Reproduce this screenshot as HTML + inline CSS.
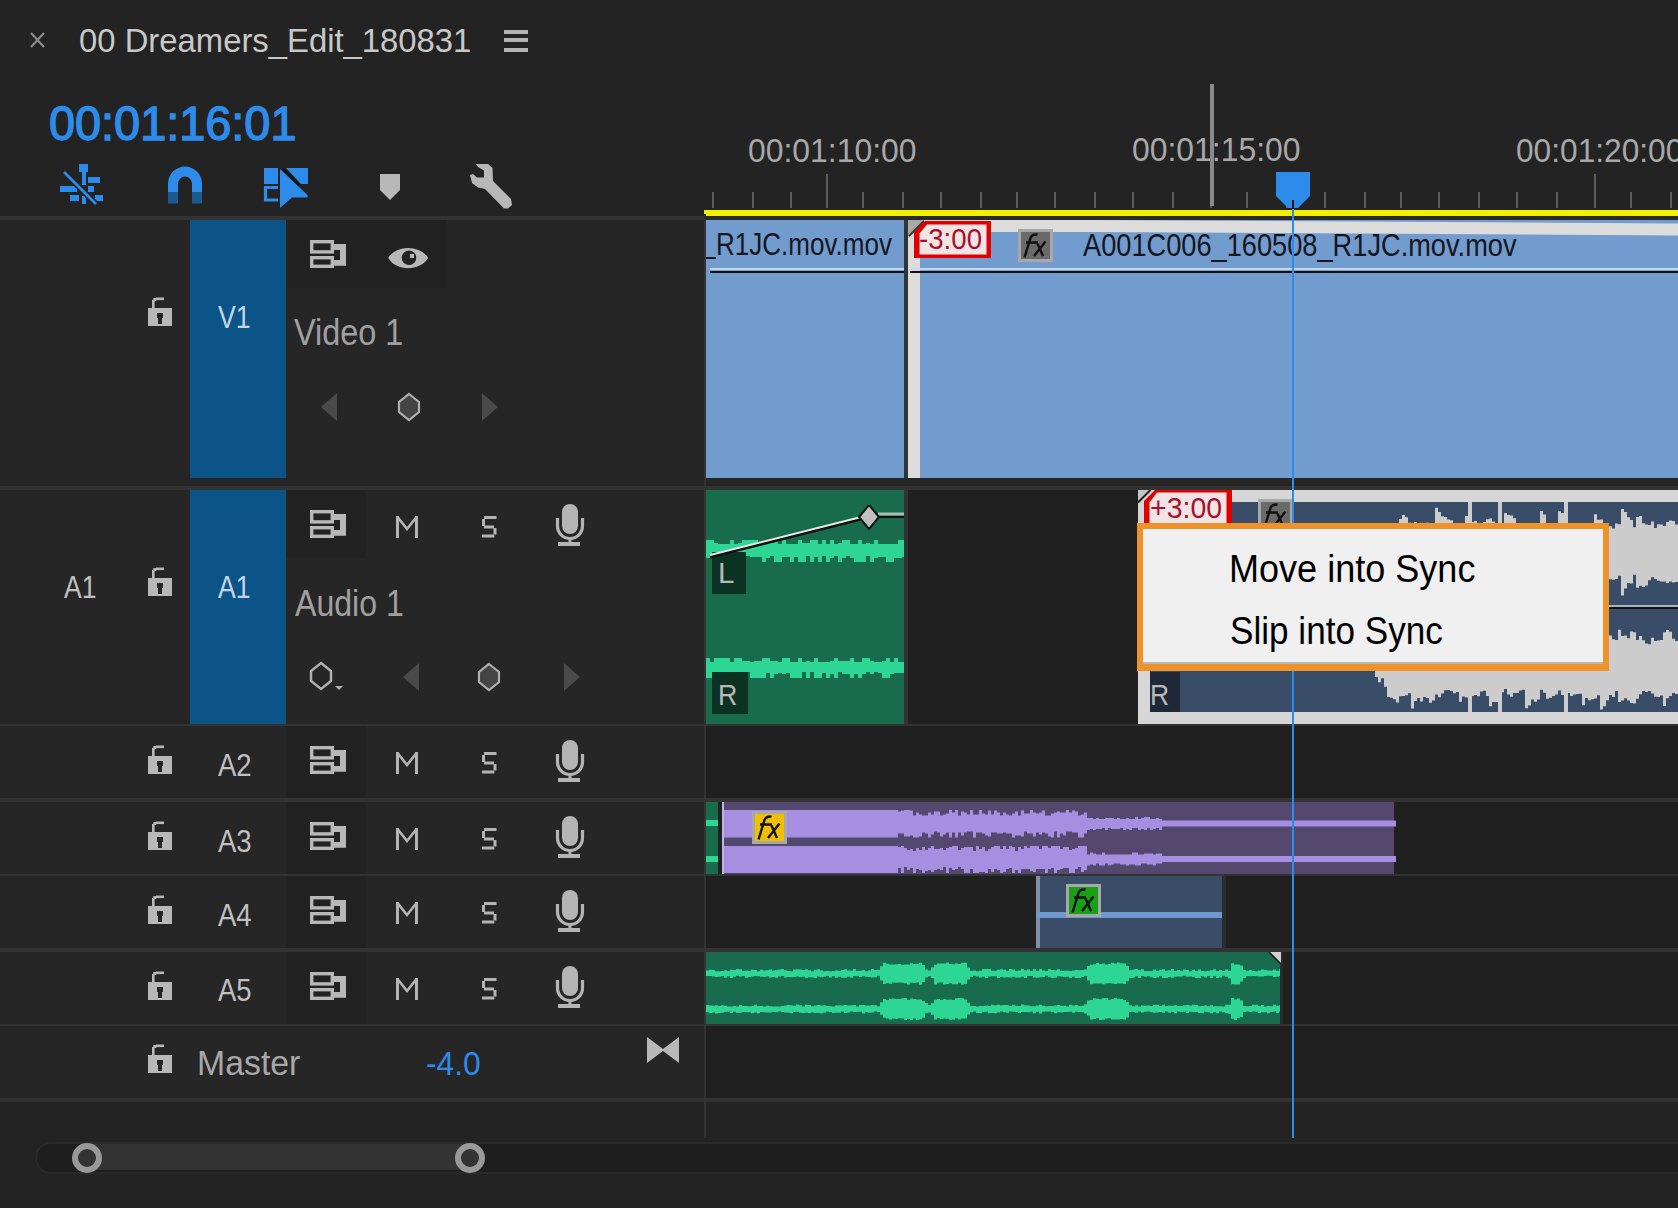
<!DOCTYPE html><html><head><meta charset="utf-8"><style>html,body{margin:0;padding:0}body{width:1678px;height:1208px;background:#232323;position:relative;overflow:hidden}</style></head><body><div style="position:absolute;left:0px;top:216px;width:704px;height:4px;background:#333333;"></div>
<div style="position:absolute;left:704px;top:216px;width:974px;height:4px;background:#2a2a2a;"></div>
<div style="position:absolute;left:0px;top:220px;width:704px;height:266px;background:#262626;"></div>
<div style="position:absolute;left:706px;top:220px;width:972px;height:266px;background:#202020;"></div>
<div style="position:absolute;left:0px;top:490px;width:704px;height:234px;background:#262626;"></div>
<div style="position:absolute;left:706px;top:490px;width:972px;height:234px;background:#202020;"></div>
<div style="position:absolute;left:0px;top:726px;width:704px;height:72px;background:#262626;"></div>
<div style="position:absolute;left:706px;top:726px;width:972px;height:72px;background:#202020;"></div>
<div style="position:absolute;left:0px;top:802px;width:704px;height:72px;background:#262626;"></div>
<div style="position:absolute;left:706px;top:802px;width:972px;height:72px;background:#202020;"></div>
<div style="position:absolute;left:0px;top:876px;width:704px;height:72px;background:#262626;"></div>
<div style="position:absolute;left:706px;top:876px;width:972px;height:72px;background:#202020;"></div>
<div style="position:absolute;left:0px;top:952px;width:704px;height:72px;background:#262626;"></div>
<div style="position:absolute;left:706px;top:952px;width:972px;height:72px;background:#202020;"></div>
<div style="position:absolute;left:0px;top:1026px;width:704px;height:72px;background:#262626;"></div>
<div style="position:absolute;left:706px;top:1026px;width:972px;height:72px;background:#202020;"></div>
<div style="position:absolute;left:706px;top:478px;width:972px;height:8px;background:#262626;"></div>
<div style="position:absolute;left:0px;top:486px;width:1678px;height:4px;background:#333333;"></div>
<div style="position:absolute;left:0px;top:724px;width:1678px;height:2px;background:#333333;"></div>
<div style="position:absolute;left:0px;top:798px;width:1678px;height:4px;background:#333333;"></div>
<div style="position:absolute;left:0px;top:874px;width:1678px;height:2px;background:#333333;"></div>
<div style="position:absolute;left:0px;top:948px;width:1678px;height:4px;background:#333333;"></div>
<div style="position:absolute;left:0px;top:1024px;width:1678px;height:2px;background:#333333;"></div>
<div style="position:absolute;left:0px;top:1098px;width:1678px;height:4px;background:#333333;"></div>
<div style="position:absolute;left:704px;top:220px;width:2px;height:918px;background:#333333;"></div>
<div style="position:absolute;left:286px;top:220px;width:161px;height:68px;background:#222222;"></div>
<div style="position:absolute;left:286px;top:490px;width:80px;height:68px;background:#222222;"></div>
<div style="position:absolute;left:286px;top:726px;width:80px;height:72px;background:#222222;"></div>
<div style="position:absolute;left:286px;top:802px;width:80px;height:72px;background:#222222;"></div>
<div style="position:absolute;left:286px;top:876px;width:80px;height:72px;background:#222222;"></div>
<div style="position:absolute;left:286px;top:952px;width:80px;height:72px;background:#222222;"></div>
<svg style="position:absolute;left:28px;top:30px;" width="20" height="20" viewBox="0 0 20 20"><path d="M3 3L16 17M16 3L3 17" stroke="#8a8a8a" stroke-width="2.2"/></svg>
<div id="title" style="position:absolute;left:79.00px;top:22.50px;font-family:'Liberation Sans',sans-serif;font-size:34px;line-height:34px;color:#c8c8c8;white-space:nowrap;transform:scaleX(0.9655);transform-origin:0 0;">00 Dreamers_Edit_180831</div>
<div style="position:absolute;left:504px;top:30px;width:24px;height:4px;background:#b4b4b4;"></div>
<div style="position:absolute;left:504px;top:38px;width:24px;height:4px;background:#b4b4b4;"></div>
<div style="position:absolute;left:504px;top:48px;width:24px;height:4px;background:#b4b4b4;"></div>
<div id="tc" style="position:absolute;left:49.00px;top:100.00px;font-family:'Liberation Sans',sans-serif;font-size:48px;line-height:48px;color:#2d8ceb;white-space:nowrap;transform:scaleX(0.9759);transform-origin:0 0;-webkit-text-stroke:1.4px #2d8ceb;">00:01:16:01</div>
<svg style="position:absolute;left:56px;top:160px" width="52" height="48" viewBox="56 160 52 48"><g fill="#2d8ceb"><rect x="79" y="164" width="9" height="8"/><rect x="82" y="172" width="4" height="13"/><rect x="88" y="177" width="12" height="6"/><rect x="60" y="186" width="17" height="6"/><rect x="88" y="186" width="6" height="6"/><rect x="70" y="195" width="9" height="6"/><rect x="82" y="196" width="4" height="8"/><rect x="95" y="195" width="8" height="6"/></g><path d="M64 172L96 204" stroke="#232323" stroke-width="6"/><path d="M64 172L96 204" stroke="#2d8ceb" stroke-width="2.6"/></svg>
<svg style="position:absolute;left:164px;top:162px" width="42" height="46" viewBox="164 162 42 46"><path d="M168 192V183.6A17 17 0 0 1 202 183.6V192H192V183.6A7 7 0 0 0 178 183.6V192Z" fill="#2d8ceb"/><rect x="168" y="192" width="10" height="11.5" fill="#1d5a92"/><rect x="192" y="192" width="10" height="11.5" fill="#1d5a92"/></svg>
<svg style="position:absolute;left:260px;top:164px" width="52" height="48" viewBox="260 164 52 48"><rect x="264" y="168" width="14" height="16" fill="#2d8ceb"/><path d="M278 187.5H265.5V200H278" fill="none" stroke="#2d8ceb" stroke-width="3.2"/><path d="M280 169L307.5 195V197.5H292L280 208Z" fill="#2d8ceb"/><path d="M286 168H308V184H301Z" fill="#2d8ceb"/><path d="M283 169L299 185" stroke="#111" stroke-width="2.2"/></svg>
<svg style="position:absolute;left:376px;top:170px" width="28" height="34" viewBox="376 170 28 34"><path d="M380 174H400V190L390 200L380 190Z" fill="#b8b8b8"/></svg>
<svg style="position:absolute;left:464px;top:158px" width="54" height="54" viewBox="464 158 54 54"><path d="M476 164H488L492.5 168L493 181L511 199L512 205L508 208.5H504L485 189L478 187.5L472 183L470 175L473 174L477 177.5H484V170.5L478 167Z" fill="#b8b8b8"/></svg>
<div id="r1" style="position:absolute;left:747.60px;top:133.60px;font-family:'Liberation Sans',sans-serif;font-size:33px;line-height:33px;color:#a8a8a8;white-space:nowrap;transform:scaleX(0.9672);transform-origin:0 0;">00:01:10:00</div>
<div id="r2" style="position:absolute;left:1131.80px;top:133.40px;font-family:'Liberation Sans',sans-serif;font-size:33px;line-height:33px;color:#a8a8a8;white-space:nowrap;transform:scaleX(0.9672);transform-origin:0 0;">00:01:15:00</div>
<div id="r3" style="position:absolute;left:1515.60px;top:133.60px;font-family:'Liberation Sans',sans-serif;font-size:33px;line-height:33px;color:#a8a8a8;white-space:nowrap;transform:scaleX(0.9600);transform-origin:0 0;">00:01:20:00</div>
<div style="position:absolute;left:712px;top:192px;width:2px;height:16px;background:#5c5c5c;"></div>
<div style="position:absolute;left:752px;top:192px;width:2px;height:16px;background:#5c5c5c;"></div>
<div style="position:absolute;left:790px;top:192px;width:2px;height:16px;background:#5c5c5c;"></div>
<div style="position:absolute;left:826px;top:174px;width:2px;height:34px;background:#5c5c5c;"></div>
<div style="position:absolute;left:862px;top:192px;width:2px;height:16px;background:#5c5c5c;"></div>
<div style="position:absolute;left:902px;top:192px;width:2px;height:16px;background:#5c5c5c;"></div>
<div style="position:absolute;left:940px;top:192px;width:2px;height:16px;background:#5c5c5c;"></div>
<div style="position:absolute;left:980px;top:192px;width:2px;height:16px;background:#5c5c5c;"></div>
<div style="position:absolute;left:1016px;top:192px;width:2px;height:16px;background:#5c5c5c;"></div>
<div style="position:absolute;left:1054px;top:192px;width:2px;height:16px;background:#5c5c5c;"></div>
<div style="position:absolute;left:1094px;top:192px;width:2px;height:16px;background:#5c5c5c;"></div>
<div style="position:absolute;left:1132px;top:192px;width:2px;height:16px;background:#5c5c5c;"></div>
<div style="position:absolute;left:1172px;top:192px;width:2px;height:16px;background:#5c5c5c;"></div>
<div style="position:absolute;left:1210px;top:174px;width:2px;height:34px;background:#5c5c5c;"></div>
<div style="position:absolute;left:1246px;top:192px;width:2px;height:16px;background:#5c5c5c;"></div>
<div style="position:absolute;left:1286px;top:192px;width:2px;height:16px;background:#5c5c5c;"></div>
<div style="position:absolute;left:1324px;top:192px;width:2px;height:16px;background:#5c5c5c;"></div>
<div style="position:absolute;left:1364px;top:192px;width:2px;height:16px;background:#5c5c5c;"></div>
<div style="position:absolute;left:1400px;top:192px;width:2px;height:16px;background:#5c5c5c;"></div>
<div style="position:absolute;left:1438px;top:192px;width:2px;height:16px;background:#5c5c5c;"></div>
<div style="position:absolute;left:1478px;top:192px;width:2px;height:16px;background:#5c5c5c;"></div>
<div style="position:absolute;left:1516px;top:192px;width:2px;height:16px;background:#5c5c5c;"></div>
<div style="position:absolute;left:1556px;top:192px;width:2px;height:16px;background:#5c5c5c;"></div>
<div style="position:absolute;left:1594px;top:174px;width:2px;height:34px;background:#5c5c5c;"></div>
<div style="position:absolute;left:1630px;top:192px;width:2px;height:16px;background:#5c5c5c;"></div>
<div style="position:absolute;left:1670px;top:192px;width:2px;height:16px;background:#5c5c5c;"></div>
<div style="position:absolute;left:1210px;top:84px;width:4px;height:122px;background:#8a8a8a;"></div>
<div style="position:absolute;left:704px;top:210px;width:974px;height:6px;background:#f0f000;"></div>
<div style="position:absolute;left:704px;top:214px;width:2px;height:2px;background:#232323;"></div>
<div style="position:absolute;left:190px;top:220px;width:96px;height:258px;background:#0a5488;"></div>
<div style="position:absolute;left:190px;top:490px;width:96px;height:234px;background:#0a5488;"></div>
<svg style="position:absolute;left:146px;top:296px" width="28" height="32" viewBox="146 296 28 32"><g fill="#b8b8b8"><rect x="148" y="308" width="24" height="18"/><rect x="152" y="300" width="2.6" height="8.5"/><rect x="153.3" y="298" width="3" height="3"/><rect x="156" y="297.5" width="8" height="2.6"/></g><rect x="157" y="313" width="6" height="5" fill="#262626"/><rect x="158" y="317" width="4" height="7" fill="#262626"/></svg>
<svg style="position:absolute;left:146px;top:566px" width="28" height="32" viewBox="146 566 28 32"><g fill="#b8b8b8"><rect x="148" y="578" width="24" height="18"/><rect x="152" y="570" width="2.6" height="8.5"/><rect x="153.3" y="568" width="3" height="3"/><rect x="156" y="567.5" width="8" height="2.6"/></g><rect x="157" y="583" width="6" height="5" fill="#262626"/><rect x="158" y="587" width="4" height="7" fill="#262626"/></svg>
<svg style="position:absolute;left:146px;top:744px" width="28" height="32" viewBox="146 744 28 32"><g fill="#b8b8b8"><rect x="148" y="756" width="24" height="18"/><rect x="152" y="748" width="2.6" height="8.5"/><rect x="153.3" y="746" width="3" height="3"/><rect x="156" y="745.5" width="8" height="2.6"/></g><rect x="157" y="761" width="6" height="5" fill="#262626"/><rect x="158" y="765" width="4" height="7" fill="#262626"/></svg>
<svg style="position:absolute;left:146px;top:820px" width="28" height="32" viewBox="146 820 28 32"><g fill="#b8b8b8"><rect x="148" y="832" width="24" height="18"/><rect x="152" y="824" width="2.6" height="8.5"/><rect x="153.3" y="822" width="3" height="3"/><rect x="156" y="821.5" width="8" height="2.6"/></g><rect x="157" y="837" width="6" height="5" fill="#262626"/><rect x="158" y="841" width="4" height="7" fill="#262626"/></svg>
<svg style="position:absolute;left:146px;top:894px" width="28" height="32" viewBox="146 894 28 32"><g fill="#b8b8b8"><rect x="148" y="906" width="24" height="18"/><rect x="152" y="898" width="2.6" height="8.5"/><rect x="153.3" y="896" width="3" height="3"/><rect x="156" y="895.5" width="8" height="2.6"/></g><rect x="157" y="911" width="6" height="5" fill="#262626"/><rect x="158" y="915" width="4" height="7" fill="#262626"/></svg>
<svg style="position:absolute;left:146px;top:970px" width="28" height="32" viewBox="146 970 28 32"><g fill="#b8b8b8"><rect x="148" y="982" width="24" height="18"/><rect x="152" y="974" width="2.6" height="8.5"/><rect x="153.3" y="972" width="3" height="3"/><rect x="156" y="971.5" width="8" height="2.6"/></g><rect x="157" y="987" width="6" height="5" fill="#262626"/><rect x="158" y="991" width="4" height="7" fill="#262626"/></svg>
<svg style="position:absolute;left:146px;top:1043px" width="28" height="32" viewBox="146 1043 28 32"><g fill="#b8b8b8"><rect x="148" y="1055" width="24" height="18"/><rect x="152" y="1047" width="2.6" height="8.5"/><rect x="153.3" y="1045" width="3" height="3"/><rect x="156" y="1044.5" width="8" height="2.6"/></g><rect x="157" y="1060" width="6" height="5" fill="#262626"/><rect x="158" y="1064" width="4" height="7" fill="#262626"/></svg>
<svg style="position:absolute;left:308px;top:238px" width="40" height="32" viewBox="308 238 40 32"><g fill="none" stroke="#b8b8b8" stroke-width="3.4"><rect x="311.7" y="241.7" width="20.6" height="10.2"/><rect x="311.7" y="257.7" width="20.6" height="8.6"/></g><path d="M334 244H346V265.7H334V260H340V250H334Z" fill="#b8b8b8"/></svg>
<svg style="position:absolute;left:386px;top:244px" width="44" height="28" viewBox="386 244 44 28"><path d="M388.2 258C396 244.5 420 244.5 428.2 258C420 271.5 396 271.5 388.2 258Z" fill="#b8b8b8"/><circle cx="409" cy="257.8" r="7.3" fill="#222"/><rect x="410" y="254" width="4" height="4" fill="#b8b8b8"/></svg>
<svg style="position:absolute;left:308px;top:508px" width="40" height="32" viewBox="308 508 40 32"><g fill="none" stroke="#b8b8b8" stroke-width="3.4"><rect x="311.7" y="511.7" width="20.6" height="10.2"/><rect x="311.7" y="527.7" width="20.6" height="8.6"/></g><path d="M334 514H346V535.7H334V530H340V520H334Z" fill="#b8b8b8"/></svg>
<svg style="position:absolute;left:394px;top:514px" width="26" height="26" viewBox="394 514 26 26"><g fill="#b4b4b4"><rect x="396" y="516" width="3" height="22"/><rect x="415" y="516" width="3" height="22"/></g><path d="M397.5 517L407 529L416.5 517" fill="none" stroke="#b4b4b4" stroke-width="2.6"/></svg>
<svg style="position:absolute;left:480px;top:514px" width="20" height="26" viewBox="480 514 20 26"><g fill="#b4b4b4"><rect x="484" y="516" width="12.5" height="3"/><rect x="482" y="519" width="3" height="7"/><rect x="484" y="525.5" width="10" height="3"/><rect x="493.5" y="528" width="3" height="6.5"/><rect x="482" y="534.5" width="12.3" height="3"/></g></svg>
<svg style="position:absolute;left:555px;top:503px;" width="30" height="44" viewBox="0 0 30 44"><rect x="7" y="1" width="16" height="30" rx="8" fill="#b4b4b4"/><path d="M2.5 15V23A12.5 12.5 0 0 0 27.5 23V15" fill="none" stroke="#b4b4b4" stroke-width="3.2"/><rect x="13.5" y="36" width="3" height="5" fill="#b4b4b4"/><rect x="3" y="39" width="22" height="4" fill="#b4b4b4"/></svg>
<svg style="position:absolute;left:308px;top:744px" width="40" height="32" viewBox="308 744 40 32"><g fill="none" stroke="#b8b8b8" stroke-width="3.4"><rect x="311.7" y="747.7" width="20.6" height="10.2"/><rect x="311.7" y="763.7" width="20.6" height="8.6"/></g><path d="M334 750H346V771.7H334V766H340V756H334Z" fill="#b8b8b8"/></svg>
<svg style="position:absolute;left:394px;top:750px" width="26" height="26" viewBox="394 750 26 26"><g fill="#b4b4b4"><rect x="396" y="752" width="3" height="22"/><rect x="415" y="752" width="3" height="22"/></g><path d="M397.5 753L407 765L416.5 753" fill="none" stroke="#b4b4b4" stroke-width="2.6"/></svg>
<svg style="position:absolute;left:480px;top:750px" width="20" height="26" viewBox="480 750 20 26"><g fill="#b4b4b4"><rect x="484" y="752" width="12.5" height="3"/><rect x="482" y="755" width="3" height="7"/><rect x="484" y="761.5" width="10" height="3"/><rect x="493.5" y="764" width="3" height="6.5"/><rect x="482" y="770.5" width="12.3" height="3"/></g></svg>
<svg style="position:absolute;left:555px;top:739px;" width="30" height="44" viewBox="0 0 30 44"><rect x="7" y="1" width="16" height="30" rx="8" fill="#b4b4b4"/><path d="M2.5 15V23A12.5 12.5 0 0 0 27.5 23V15" fill="none" stroke="#b4b4b4" stroke-width="3.2"/><rect x="13.5" y="36" width="3" height="5" fill="#b4b4b4"/><rect x="3" y="39" width="22" height="4" fill="#b4b4b4"/></svg>
<svg style="position:absolute;left:308px;top:820px" width="40" height="32" viewBox="308 820 40 32"><g fill="none" stroke="#b8b8b8" stroke-width="3.4"><rect x="311.7" y="823.7" width="20.6" height="10.2"/><rect x="311.7" y="839.7" width="20.6" height="8.6"/></g><path d="M334 826H346V847.7H334V842H340V832H334Z" fill="#b8b8b8"/></svg>
<svg style="position:absolute;left:394px;top:826px" width="26" height="26" viewBox="394 826 26 26"><g fill="#b4b4b4"><rect x="396" y="828" width="3" height="22"/><rect x="415" y="828" width="3" height="22"/></g><path d="M397.5 829L407 841L416.5 829" fill="none" stroke="#b4b4b4" stroke-width="2.6"/></svg>
<svg style="position:absolute;left:480px;top:826px" width="20" height="26" viewBox="480 826 20 26"><g fill="#b4b4b4"><rect x="484" y="828" width="12.5" height="3"/><rect x="482" y="831" width="3" height="7"/><rect x="484" y="837.5" width="10" height="3"/><rect x="493.5" y="840" width="3" height="6.5"/><rect x="482" y="846.5" width="12.3" height="3"/></g></svg>
<svg style="position:absolute;left:555px;top:815px;" width="30" height="44" viewBox="0 0 30 44"><rect x="7" y="1" width="16" height="30" rx="8" fill="#b4b4b4"/><path d="M2.5 15V23A12.5 12.5 0 0 0 27.5 23V15" fill="none" stroke="#b4b4b4" stroke-width="3.2"/><rect x="13.5" y="36" width="3" height="5" fill="#b4b4b4"/><rect x="3" y="39" width="22" height="4" fill="#b4b4b4"/></svg>
<svg style="position:absolute;left:308px;top:894px" width="40" height="32" viewBox="308 894 40 32"><g fill="none" stroke="#b8b8b8" stroke-width="3.4"><rect x="311.7" y="897.7" width="20.6" height="10.2"/><rect x="311.7" y="913.7" width="20.6" height="8.6"/></g><path d="M334 900H346V921.7H334V916H340V906H334Z" fill="#b8b8b8"/></svg>
<svg style="position:absolute;left:394px;top:900px" width="26" height="26" viewBox="394 900 26 26"><g fill="#b4b4b4"><rect x="396" y="902" width="3" height="22"/><rect x="415" y="902" width="3" height="22"/></g><path d="M397.5 903L407 915L416.5 903" fill="none" stroke="#b4b4b4" stroke-width="2.6"/></svg>
<svg style="position:absolute;left:480px;top:900px" width="20" height="26" viewBox="480 900 20 26"><g fill="#b4b4b4"><rect x="484" y="902" width="12.5" height="3"/><rect x="482" y="905" width="3" height="7"/><rect x="484" y="911.5" width="10" height="3"/><rect x="493.5" y="914" width="3" height="6.5"/><rect x="482" y="920.5" width="12.3" height="3"/></g></svg>
<svg style="position:absolute;left:555px;top:889px;" width="30" height="44" viewBox="0 0 30 44"><rect x="7" y="1" width="16" height="30" rx="8" fill="#b4b4b4"/><path d="M2.5 15V23A12.5 12.5 0 0 0 27.5 23V15" fill="none" stroke="#b4b4b4" stroke-width="3.2"/><rect x="13.5" y="36" width="3" height="5" fill="#b4b4b4"/><rect x="3" y="39" width="22" height="4" fill="#b4b4b4"/></svg>
<svg style="position:absolute;left:308px;top:970px" width="40" height="32" viewBox="308 970 40 32"><g fill="none" stroke="#b8b8b8" stroke-width="3.4"><rect x="311.7" y="973.7" width="20.6" height="10.2"/><rect x="311.7" y="989.7" width="20.6" height="8.6"/></g><path d="M334 976H346V997.7H334V992H340V982H334Z" fill="#b8b8b8"/></svg>
<svg style="position:absolute;left:394px;top:976px" width="26" height="26" viewBox="394 976 26 26"><g fill="#b4b4b4"><rect x="396" y="978" width="3" height="22"/><rect x="415" y="978" width="3" height="22"/></g><path d="M397.5 979L407 991L416.5 979" fill="none" stroke="#b4b4b4" stroke-width="2.6"/></svg>
<svg style="position:absolute;left:480px;top:976px" width="20" height="26" viewBox="480 976 20 26"><g fill="#b4b4b4"><rect x="484" y="978" width="12.5" height="3"/><rect x="482" y="981" width="3" height="7"/><rect x="484" y="987.5" width="10" height="3"/><rect x="493.5" y="990" width="3" height="6.5"/><rect x="482" y="996.5" width="12.3" height="3"/></g></svg>
<svg style="position:absolute;left:555px;top:965px;" width="30" height="44" viewBox="0 0 30 44"><rect x="7" y="1" width="16" height="30" rx="8" fill="#b4b4b4"/><path d="M2.5 15V23A12.5 12.5 0 0 0 27.5 23V15" fill="none" stroke="#b4b4b4" stroke-width="3.2"/><rect x="13.5" y="36" width="3" height="5" fill="#b4b4b4"/><rect x="3" y="39" width="22" height="4" fill="#b4b4b4"/></svg>
<svg style="position:absolute;left:319px;top:392px;" width="20" height="30" viewBox="0 0 20 30"><path d="M18 1V29L2 15Z" fill="#4a4a4a"/></svg>
<svg style="position:absolute;left:397px;top:392px;" width="24" height="30" viewBox="0 0 24 30"><path d="M12 2L22 10V20L12 28L2 20V10Z" fill="#444" stroke="#b0b0b0" stroke-width="2.2"/></svg>
<svg style="position:absolute;left:480px;top:392px;" width="20" height="30" viewBox="0 0 20 30"><path d="M2 1V29L18 15Z" fill="#4a4a4a"/></svg>
<svg style="position:absolute;left:401px;top:662px;" width="20" height="30" viewBox="0 0 20 30"><path d="M18 1V29L2 15Z" fill="#4a4a4a"/></svg>
<svg style="position:absolute;left:477px;top:662px;" width="24" height="30" viewBox="0 0 24 30"><path d="M12 2L22 10V20L12 28L2 20V10Z" fill="#444" stroke="#b0b0b0" stroke-width="2.2"/></svg>
<svg style="position:absolute;left:562px;top:662px;" width="20" height="30" viewBox="0 0 20 30"><path d="M2 1V29L18 15Z" fill="#4a4a4a"/></svg>
<svg style="position:absolute;left:309px;top:660px;" width="40" height="34" viewBox="0 0 40 34"><path d="M12 3L22 11V21L12 29L2 21V11Z" fill="none" stroke="#b0b0b0" stroke-width="2.5"/><path d="M26 26h8l-4 4z" fill="#b0b0b0"/></svg>
<svg style="position:absolute;left:645px;top:1035px;" width="38" height="30" viewBox="0 0 38 30"><path d="M2 2L18 14L34 2V28L18 16L2 28Z" fill="#b8b8b8"/></svg>
<div id="v1" style="position:absolute;left:218.40px;top:301.00px;font-family:'Liberation Sans',sans-serif;font-size:32px;line-height:32px;color:#c4d4e4;white-space:nowrap;transform:scaleX(0.8326);transform-origin:0 0;">V1</div>
<div id="vid1" style="position:absolute;left:294.00px;top:315.00px;font-family:'Liberation Sans',sans-serif;font-size:36px;line-height:36px;color:#a0a0a0;white-space:nowrap;transform:scaleX(0.9000);transform-origin:0 0;">Video 1</div>
<div id="a1s" style="position:absolute;left:64.40px;top:571.00px;font-family:'Liberation Sans',sans-serif;font-size:32px;line-height:32px;color:#c0c0c0;white-space:nowrap;transform:scaleX(0.8274);transform-origin:0 0;">A1</div>
<div id="a1" style="position:absolute;left:218.40px;top:571.00px;font-family:'Liberation Sans',sans-serif;font-size:32px;line-height:32px;color:#c4d4e4;white-space:nowrap;transform:scaleX(0.8322);transform-origin:0 0;">A1</div>
<div id="aud1" style="position:absolute;left:295.00px;top:586.00px;font-family:'Liberation Sans',sans-serif;font-size:36px;line-height:36px;color:#a0a0a0;white-space:nowrap;transform:scaleX(0.8917);transform-origin:0 0;">Audio 1</div>
<div id="a2" style="position:absolute;left:218.20px;top:749.00px;font-family:'Liberation Sans',sans-serif;font-size:32px;line-height:32px;color:#c0c0c0;white-space:nowrap;transform:scaleX(0.8588);transform-origin:0 0;">A2</div>
<div id="a3" style="position:absolute;left:218.20px;top:825.00px;font-family:'Liberation Sans',sans-serif;font-size:32px;line-height:32px;color:#c0c0c0;white-space:nowrap;transform:scaleX(0.8586);transform-origin:0 0;">A3</div>
<div id="a4" style="position:absolute;left:218.20px;top:899.00px;font-family:'Liberation Sans',sans-serif;font-size:32px;line-height:32px;color:#c0c0c0;white-space:nowrap;transform:scaleX(0.8586);transform-origin:0 0;">A4</div>
<div id="a5" style="position:absolute;left:218.20px;top:974.00px;font-family:'Liberation Sans',sans-serif;font-size:32px;line-height:32px;color:#c0c0c0;white-space:nowrap;transform:scaleX(0.8586);transform-origin:0 0;">A5</div>
<div id="master" style="position:absolute;left:196.80px;top:1045.40px;font-family:'Liberation Sans',sans-serif;font-size:35px;line-height:35px;color:#a8a8a8;white-space:nowrap;transform:scaleX(0.9662);transform-origin:0 0;">Master</div>
<div id="vol" style="position:absolute;left:425.80px;top:1047.40px;font-family:'Liberation Sans',sans-serif;font-size:33px;line-height:33px;color:#2d8ceb;white-space:nowrap;transform:scaleX(0.9640);transform-origin:0 0;">-4.0</div>
<div style="position:absolute;left:706px;top:220px;width:198px;height:258px;background:#729bce;"></div>
<div style="position:absolute;left:706px;top:222px;width:198px;height:40px;overflow:hidden">
<div id="c1name" style="position:absolute;left:10.00px;top:7.00px;font-family:'Liberation Sans',sans-serif;font-size:31px;line-height:31px;color:#161620;white-space:nowrap;transform:scaleX(0.8400);transform-origin:0 0;">R1JC.mov.mov</div>
</div>
<div style="position:absolute;left:706px;top:257px;width:10px;height:2px;background:#161620;"></div>
<div style="position:absolute;left:710px;top:268px;width:194px;height:2px;background:#c8d8ee;"></div>
<div style="position:absolute;left:710px;top:271px;width:194px;height:2px;background:#111111;"></div>
<div style="position:absolute;left:904px;top:220px;width:4px;height:258px;background:#333333;"></div>
<div style="position:absolute;left:908px;top:220px;width:770px;height:258px;background:#dcdcdc;"></div>
<div style="position:absolute;left:920px;top:232px;width:758px;height:246px;background:#729bce;"></div>
<svg style="position:absolute;left:1080px;top:218px" width="598" height="20" viewBox="1080 218 598 20"><path d="M1090 220L1678 223.5V220Z" fill="#729bce"/><path d="M1090 232L1678 235.5V232Z" fill="#dcdcdc"/></svg>
<svg style="position:absolute;left:908px;top:220px;" width="18" height="18" viewBox="0 0 18 18"><path d="M0 0H16L0 16Z" fill="#a8a8a8"/><path d="M16 1L1 16" stroke="#333" stroke-width="2"/></svg>
<div style="position:absolute;left:910px;top:268px;width:768px;height:2px;background:#c8d8ee;"></div>
<div style="position:absolute;left:910px;top:271px;width:768px;height:2px;background:#111111;"></div>
<svg style="position:absolute;left:908px;top:218px" width="90" height="44" viewBox="908 218 90 44"><path d="M925 221H991V258H914V232Z" fill="#e00000"/><path d="M927 224.5H986.5V254.5H919.5V233.5Z" fill="#f0e4e4"/></svg>
<div id="m3" style="position:absolute;left:918.60px;top:223.60px;font-family:'Liberation Sans',sans-serif;font-size:30px;line-height:30px;color:#a8102a;white-space:nowrap;transform:scaleX(0.9214);transform-origin:0 0;">-3:00</div>
<svg style="position:absolute;left:1018px;top:229px;" width="35" height="33" viewBox="0 0 35 33"><rect x="1.5" y="1.5" width="32" height="30" fill="#6a6a6a" stroke="#a8a8a8" stroke-width="3"/><path d="M6.5 28.5L12.5 9Q14 5 19.5 5.5M8 13.5H20M27.5 12.5L16 27M19.5 14.5L25 27" fill="none" stroke="#111" stroke-width="2.4"/></svg>
<div id="c2name" style="position:absolute;left:1082.60px;top:230.00px;font-family:'Liberation Sans',sans-serif;font-size:31px;line-height:31px;color:#161620;white-space:nowrap;transform:scaleX(0.8776);transform-origin:0 0;">A001C006_160508_R1JC.mov.mov</div>
<div style="position:absolute;left:706px;top:490px;width:198px;height:234px;background:#186b4c;"></div>
<div style="position:absolute;left:904px;top:490px;width:4px;height:234px;background:#333333;"></div>
<svg style="position:absolute;left:0;top:0" width="1678" height="1208">
<path d="M706 540L710 540L710 540L714 540L714 543L718 543L718 544L722 544L722 544L726 544L726 544L730 544L730 540L734 540L734 544L738 544L738 543L742 543L742 540L746 540L746 540L750 540L750 540L754 540L754 540L758 540L758 544L762 544L762 544L766 544L766 540L770 540L770 543L774 543L774 540L778 540L778 544L782 544L782 540L786 540L786 544L790 544L790 544L794 544L794 544L798 544L798 540L802 540L802 543L806 543L806 543L810 543L810 540L814 540L814 540L818 540L818 544L822 544L822 540L826 540L826 544L830 544L830 540L834 540L834 544L838 544L838 543L842 543L842 540L846 540L846 540L850 540L850 544L854 544L854 544L858 544L858 540L862 540L862 544L866 544L866 543L870 543L870 544L874 544L874 540L878 540L878 544L882 544L882 544L886 544L886 544L890 544L890 544L894 544L894 544L898 544L898 540L902 540L902 540L904 540L904 557L902 557L902 558L898 558L898 558L894 558L894 562L890 562L890 562L886 562L886 557L882 557L882 557L878 557L878 558L874 558L874 562L870 562L870 556L866 556L866 562L862 562L862 562L858 562L858 562L854 562L854 558L850 558L850 556L846 556L846 558L842 558L842 562L838 562L838 556L834 556L834 558L830 558L830 562L826 562L826 556L822 556L822 562L818 562L818 557L814 557L814 562L810 562L810 556L806 556L806 562L802 562L802 562L798 562L798 557L794 557L794 562L790 562L790 557L786 557L786 557L782 557L782 562L778 562L778 562L774 562L774 556L770 556L770 558L766 558L766 562L762 562L762 557L758 557L758 557L754 557L754 557L750 557L750 556L746 556L746 557L742 557L742 562L738 562L738 556L734 556L734 558L730 558L730 558L726 558L726 562L722 562L722 562L718 562L718 562L714 562L714 557L710 557L710 558L706 558Z" fill="#2dd695"/>
<path d="M706 658L710 658L710 662L714 662L714 658L718 658L718 658L722 658L722 658L726 658L726 658L730 658L730 662L734 662L734 658L738 658L738 658L742 658L742 661L746 661L746 661L750 661L750 662L754 662L754 661L758 661L758 661L762 661L762 658L766 658L766 658L770 658L770 661L774 661L774 661L778 661L778 662L782 662L782 658L786 658L786 658L790 658L790 662L794 662L794 662L798 662L798 658L802 658L802 662L806 662L806 661L810 661L810 662L814 662L814 658L818 658L818 662L822 662L822 662L826 662L826 662L830 662L830 661L834 661L834 658L838 658L838 661L842 661L842 661L846 661L846 661L850 661L850 658L854 658L854 662L858 662L858 662L862 662L862 658L866 658L866 658L870 658L870 661L874 661L874 662L878 662L878 662L882 662L882 661L886 661L886 658L890 658L890 662L894 662L894 658L898 658L898 662L902 662L902 662L904 662L904 673L902 673L902 673L898 673L898 673L894 673L894 674L890 674L890 678L886 678L886 678L882 678L882 673L878 673L878 672L874 672L874 674L870 674L870 672L866 672L866 674L862 674L862 678L858 678L858 674L854 674L854 678L850 678L850 674L846 674L846 674L842 674L842 672L838 672L838 678L834 678L834 674L830 674L830 678L826 678L826 673L822 673L822 678L818 678L818 678L814 678L814 672L810 672L810 678L806 678L806 672L802 672L802 678L798 678L798 678L794 678L794 678L790 678L790 673L786 673L786 674L782 674L782 673L778 673L778 674L774 674L774 678L770 678L770 673L766 673L766 678L762 678L762 678L758 678L758 678L754 678L754 678L750 678L750 672L746 672L746 674L742 674L742 678L738 678L738 678L734 678L734 678L730 678L730 678L726 678L726 674L722 674L722 678L718 678L718 678L714 678L714 678L710 678L710 678L706 678Z" fill="#2dd695"/>
</svg>
<div style="position:absolute;left:712px;top:552px;width:34px;height:42px;background:#0b3222;"></div>
<div style="position:absolute;left:712px;top:672px;width:36px;height:42px;background:#0b3222;"></div>
<div id="L" style="position:absolute;left:718.00px;top:558.40px;font-family:'Liberation Sans',sans-serif;font-size:30px;line-height:30px;color:#b8b8b8;white-space:nowrap;transform:scaleX(0.9830);transform-origin:0 0;">L</div>
<div id="R1" style="position:absolute;left:717.80px;top:680.00px;font-family:'Liberation Sans',sans-serif;font-size:30px;line-height:30px;color:#b8b8b8;white-space:nowrap;transform:scaleX(0.8937);transform-origin:0 0;">R</div>
<svg style="position:absolute;left:706px;top:505px;" width="200" height="58" viewBox="0 0 200 58"><path d="M4 52L163 12" stroke="#111" stroke-width="3"/><path d="M4 50L163 10" stroke="#e8e8e8" stroke-width="2"/><path d="M172 12H198" stroke="#111" stroke-width="2"/><path d="M172 9H198" stroke="#a8c0b4" stroke-width="3"/><path d="M163 0L173 12L163 24L153 12Z" fill="#c0c0c0" stroke="#111" stroke-width="2"/></svg>
<div style="position:absolute;left:1138px;top:490px;width:540px;height:234px;background:#d6d6d6;"></div>
<div style="position:absolute;left:1150px;top:502px;width:528px;height:210px;background:#394d68;"></div>
<svg style="position:absolute;left:0;top:0" width="1678" height="1208">
<path d="M1150 552.0L1153 552.0L1153 552.0L1156 552.0L1156 552.0L1159 552.0L1159 552.0L1162 552.0L1162 552.0L1165 552.0L1165 552.0L1168 552.0L1168 552.0L1171 552.0L1171 552.0L1174 552.0L1174 552.0L1177 552.0L1177 552.0L1180 552.0L1180 552.0L1183 552.0L1183 552.0L1186 552.0L1186 552.0L1189 552.0L1189 552.0L1192 552.0L1192 552.0L1195 552.0L1195 552.0L1198 552.0L1198 552.0L1201 552.0L1201 552.0L1204 552.0L1204 552.0L1207 552.0L1207 552.0L1210 552.0L1210 552.0L1213 552.0L1213 552.0L1216 552.0L1216 552.0L1219 552.0L1219 552.0L1222 552.0L1222 552.0L1225 552.0L1225 552.0L1228 552.0L1228 552.0L1231 552.0L1231 552.0L1234 552.0L1234 552.0L1237 552.0L1237 552.0L1240 552.0L1240 552.0L1243 552.0L1243 552.0L1246 552.0L1246 552.0L1249 552.0L1249 552.0L1252 552.0L1252 552.0L1255 552.0L1255 552.0L1258 552.0L1258 552.0L1261 552.0L1261 552.0L1264 552.0L1264 552.0L1267 552.0L1267 552.0L1270 552.0L1270 552.0L1273 552.0L1273 552.0L1276 552.0L1276 552.0L1279 552.0L1279 552.0L1282 552.0L1282 552.0L1285 552.0L1285 552.0L1288 552.0L1288 552.0L1291 552.0L1291 552.0L1294 552.0L1294 552.0L1297 552.0L1297 552.0L1300 552.0L1300 552.0L1303 552.0L1303 552.0L1306 552.0L1306 552.0L1309 552.0L1309 552.0L1312 552.0L1312 552.0L1315 552.0L1315 552.0L1318 552.0L1318 552.0L1321 552.0L1321 552.0L1324 552.0L1324 552.0L1327 552.0L1327 552.0L1330 552.0L1330 552.0L1333 552.0L1333 552.0L1336 552.0L1336 552.0L1339 552.0L1339 552.0L1342 552.0L1342 552.0L1345 552.0L1345 552.0L1348 552.0L1348 552.0L1351 552.0L1351 552.0L1354 552.0L1354 552.0L1357 552.0L1357 552.0L1360 552.0L1360 552.0L1363 552.0L1363 552.0L1366 552.0L1366 552.0L1369 552.0L1369 552.0L1372 552.0L1372 552.0L1375 552.0L1375 536.6L1378 536.6L1378 536.1L1381 536.1L1381 537.7L1384 537.7L1384 535.2L1387 535.2L1387 536.1L1390 536.1L1390 527.4L1393 527.4L1393 526.5L1396 526.5L1396 525.3L1399 525.3L1399 519.1L1402 519.1L1402 514.9L1405 514.9L1405 517.3L1408 517.3L1408 522.7L1411 522.7L1411 524.2L1414 524.2L1414 522.0L1417 522.0L1417 525.6L1420 525.6L1420 522.8L1423 522.8L1423 524.4L1426 524.4L1426 522.7L1429 522.7L1429 524.5L1432 524.5L1432 523.0L1435 523.0L1435 507.7L1438 507.7L1438 512.1L1441 512.1L1441 516.3L1444 516.3L1444 517.1L1447 517.1L1447 519.5L1450 519.5L1450 520.2L1453 520.2L1453 526.8L1456 526.8L1456 525.4L1459 525.4L1459 523.3L1462 523.3L1462 524.0L1465 524.0L1465 516.0L1468 516.0L1468 521.6L1471 521.6L1471 522.0L1474 522.0L1474 521.1L1477 521.1L1477 529.9L1480 529.9L1480 524.6L1483 524.6L1483 521.9L1486 521.9L1486 519.2L1489 519.2L1489 518.5L1492 518.5L1492 521.5L1495 521.5L1495 524.5L1498 524.5L1498 521.8L1501 521.8L1501 526.9L1504 526.9L1504 513.0L1507 513.0L1507 515.0L1510 515.0L1510 515.6L1513 515.6L1513 518.2L1516 518.2L1516 527.9L1519 527.9L1519 527.8L1522 527.8L1522 526.7L1525 526.7L1525 526.0L1528 526.0L1528 523.3L1531 523.3L1531 526.4L1534 526.4L1534 529.7L1537 529.7L1537 529.7L1540 529.7L1540 511.0L1543 511.0L1543 514.6L1546 514.6L1546 525.3L1549 525.3L1549 529.8L1552 529.8L1552 528.1L1555 528.1L1555 529.6L1558 529.6L1558 511.3L1561 511.3L1561 513.0L1564 513.0L1564 513.9L1567 513.9L1567 523.3L1570 523.3L1570 526.8L1573 526.8L1573 526.2L1576 526.2L1576 528.6L1579 528.6L1579 527.2L1582 527.2L1582 525.8L1585 525.8L1585 524.0L1588 524.0L1588 523.7L1591 523.7L1591 529.3L1594 529.3L1594 514.2L1597 514.2L1597 519.8L1600 519.8L1600 519.5L1603 519.5L1603 525.4L1606 525.4L1606 523.6L1609 523.6L1609 526.3L1612 526.3L1612 528.4L1615 528.4L1615 523.5L1618 523.5L1618 524.3L1621 524.3L1621 509.0L1624 509.0L1624 512.1L1627 512.1L1627 517.2L1630 517.2L1630 520.0L1633 520.0L1633 527.2L1636 527.2L1636 517.1L1639 517.1L1639 516.0L1642 516.0L1642 523.3L1645 523.3L1645 524.5L1648 524.5L1648 525.0L1651 525.0L1651 521.5L1654 521.5L1654 528.1L1657 528.1L1657 524.2L1660 524.2L1660 524.5L1663 524.5L1663 526.1L1666 526.1L1666 522.1L1669 522.1L1669 520.6L1672 520.6L1672 520.9L1675 520.9L1675 524.5L1678 524.5L1678 582.0L1675 582.0L1675 582.4L1672 582.4L1672 581.5L1669 581.5L1669 583.0L1666 583.0L1666 581.6L1663 581.6L1663 581.6L1660 581.6L1660 580.7L1657 580.7L1657 578.9L1654 578.9L1654 577.3L1651 577.3L1651 580.3L1648 580.3L1648 585.4L1645 585.4L1645 586.9L1642 586.9L1642 585.8L1639 585.8L1639 587.7L1636 587.7L1636 574.7L1633 574.7L1633 583.6L1630 583.6L1630 583.0L1627 583.0L1627 588.4L1624 588.4L1624 595.6L1621 595.6L1621 575.7L1618 575.7L1618 579.1L1615 579.1L1615 579.8L1612 579.8L1612 579.2L1609 579.2L1609 581.6L1606 581.6L1606 581.0L1603 581.0L1603 580.2L1600 580.2L1600 585.6L1597 585.6L1597 585.0L1594 585.0L1594 581.5L1591 581.5L1591 581.2L1588 581.2L1588 577.1L1585 577.1L1585 578.9L1582 578.9L1582 579.6L1579 579.6L1579 576.2L1576 576.2L1576 579.7L1573 579.7L1573 575.9L1570 575.9L1570 582.9L1567 582.9L1567 587.9L1564 587.9L1564 592.2L1561 592.2L1561 594.1L1558 594.1L1558 579.0L1555 579.0L1555 575.1L1552 575.1L1552 580.6L1549 580.6L1549 581.3L1546 581.3L1546 583.2L1543 583.2L1543 590.9L1540 590.9L1540 579.7L1537 579.7L1537 581.0L1534 581.0L1534 574.6L1531 574.6L1531 581.9L1528 581.9L1528 576.5L1525 576.5L1525 579.0L1522 579.0L1522 575.7L1519 575.7L1519 578.3L1516 578.3L1516 580.4L1513 580.4L1513 587.3L1510 587.3L1510 591.7L1507 591.7L1507 589.6L1504 589.6L1504 578.7L1501 578.7L1501 581.9L1498 581.9L1498 582.5L1495 582.5L1495 578.8L1492 578.8L1492 581.0L1489 581.0L1489 583.1L1486 583.1L1486 587.9L1483 587.9L1483 575.6L1480 575.6L1480 576.4L1477 576.4L1477 577.5L1474 577.5L1474 583.0L1471 583.0L1471 586.2L1468 586.2L1468 587.0L1465 587.0L1465 574.2L1462 574.2L1462 574.7L1459 574.7L1459 577.5L1456 577.5L1456 580.0L1453 580.0L1453 582.5L1450 582.5L1450 587.3L1447 587.3L1447 582.7L1444 582.7L1444 589.3L1441 589.3L1441 592.3L1438 592.3L1438 596.9L1435 596.9L1435 577.3L1432 577.3L1432 581.2L1429 581.2L1429 576.8L1426 576.8L1426 580.3L1423 580.3L1423 579.9L1420 579.9L1420 579.9L1417 579.9L1417 574.6L1414 574.6L1414 576.6L1411 576.6L1411 580.0L1408 580.0L1408 579.1L1405 579.1L1405 587.4L1402 587.4L1402 584.7L1399 584.7L1399 575.1L1396 575.1L1396 577.7L1393 577.7L1393 577.3L1390 577.3L1390 569.7L1387 569.7L1387 570.4L1384 570.4L1384 567.2L1381 567.2L1381 569.4L1378 569.4L1378 565.9L1375 565.9L1375 552.0L1372 552.0L1372 552.0L1369 552.0L1369 552.0L1366 552.0L1366 552.0L1363 552.0L1363 552.0L1360 552.0L1360 552.0L1357 552.0L1357 552.0L1354 552.0L1354 552.0L1351 552.0L1351 552.0L1348 552.0L1348 552.0L1345 552.0L1345 552.0L1342 552.0L1342 552.0L1339 552.0L1339 552.0L1336 552.0L1336 552.0L1333 552.0L1333 552.0L1330 552.0L1330 552.0L1327 552.0L1327 552.0L1324 552.0L1324 552.0L1321 552.0L1321 552.0L1318 552.0L1318 552.0L1315 552.0L1315 552.0L1312 552.0L1312 552.0L1309 552.0L1309 552.0L1306 552.0L1306 552.0L1303 552.0L1303 552.0L1300 552.0L1300 552.0L1297 552.0L1297 552.0L1294 552.0L1294 552.0L1291 552.0L1291 552.0L1288 552.0L1288 552.0L1285 552.0L1285 552.0L1282 552.0L1282 552.0L1279 552.0L1279 552.0L1276 552.0L1276 552.0L1273 552.0L1273 552.0L1270 552.0L1270 552.0L1267 552.0L1267 552.0L1264 552.0L1264 552.0L1261 552.0L1261 552.0L1258 552.0L1258 552.0L1255 552.0L1255 552.0L1252 552.0L1252 552.0L1249 552.0L1249 552.0L1246 552.0L1246 552.0L1243 552.0L1243 552.0L1240 552.0L1240 552.0L1237 552.0L1237 552.0L1234 552.0L1234 552.0L1231 552.0L1231 552.0L1228 552.0L1228 552.0L1225 552.0L1225 552.0L1222 552.0L1222 552.0L1219 552.0L1219 552.0L1216 552.0L1216 552.0L1213 552.0L1213 552.0L1210 552.0L1210 552.0L1207 552.0L1207 552.0L1204 552.0L1204 552.0L1201 552.0L1201 552.0L1198 552.0L1198 552.0L1195 552.0L1195 552.0L1192 552.0L1192 552.0L1189 552.0L1189 552.0L1186 552.0L1186 552.0L1183 552.0L1183 552.0L1180 552.0L1180 552.0L1177 552.0L1177 552.0L1174 552.0L1174 552.0L1171 552.0L1171 552.0L1168 552.0L1168 552.0L1165 552.0L1165 552.0L1162 552.0L1162 552.0L1159 552.0L1159 552.0L1156 552.0L1156 552.0L1153 552.0L1153 552.0L1150 552.0Z" fill="#cccccc"/>
<path d="M1150 667.0L1153 667.0L1153 667.0L1156 667.0L1156 667.0L1159 667.0L1159 667.0L1162 667.0L1162 667.0L1165 667.0L1165 667.0L1168 667.0L1168 667.0L1171 667.0L1171 667.0L1174 667.0L1174 667.0L1177 667.0L1177 667.0L1180 667.0L1180 667.0L1183 667.0L1183 667.0L1186 667.0L1186 667.0L1189 667.0L1189 667.0L1192 667.0L1192 667.0L1195 667.0L1195 667.0L1198 667.0L1198 667.0L1201 667.0L1201 667.0L1204 667.0L1204 667.0L1207 667.0L1207 667.0L1210 667.0L1210 667.0L1213 667.0L1213 667.0L1216 667.0L1216 667.0L1219 667.0L1219 667.0L1222 667.0L1222 667.0L1225 667.0L1225 667.0L1228 667.0L1228 667.0L1231 667.0L1231 667.0L1234 667.0L1234 667.0L1237 667.0L1237 667.0L1240 667.0L1240 667.0L1243 667.0L1243 667.0L1246 667.0L1246 667.0L1249 667.0L1249 667.0L1252 667.0L1252 667.0L1255 667.0L1255 667.0L1258 667.0L1258 667.0L1261 667.0L1261 667.0L1264 667.0L1264 667.0L1267 667.0L1267 667.0L1270 667.0L1270 667.0L1273 667.0L1273 667.0L1276 667.0L1276 667.0L1279 667.0L1279 667.0L1282 667.0L1282 667.0L1285 667.0L1285 667.0L1288 667.0L1288 667.0L1291 667.0L1291 667.0L1294 667.0L1294 667.0L1297 667.0L1297 667.0L1300 667.0L1300 667.0L1303 667.0L1303 667.0L1306 667.0L1306 667.0L1309 667.0L1309 667.0L1312 667.0L1312 667.0L1315 667.0L1315 667.0L1318 667.0L1318 667.0L1321 667.0L1321 667.0L1324 667.0L1324 667.0L1327 667.0L1327 667.0L1330 667.0L1330 667.0L1333 667.0L1333 667.0L1336 667.0L1336 667.0L1339 667.0L1339 667.0L1342 667.0L1342 667.0L1345 667.0L1345 667.0L1348 667.0L1348 667.0L1351 667.0L1351 667.0L1354 667.0L1354 667.0L1357 667.0L1357 667.0L1360 667.0L1360 667.0L1363 667.0L1363 667.0L1366 667.0L1366 667.0L1369 667.0L1369 667.0L1372 667.0L1372 667.0L1375 667.0L1375 655.1L1378 655.1L1378 655.5L1381 655.5L1381 650.3L1384 650.3L1384 648.1L1387 648.1L1387 637.5L1390 637.5L1390 639.0L1393 639.0L1393 635.5L1396 635.5L1396 639.1L1399 639.1L1399 636.8L1402 636.8L1402 636.2L1405 636.2L1405 640.3L1408 640.3L1408 644.5L1411 644.5L1411 629.9L1414 629.9L1414 627.8L1417 627.8L1417 633.3L1420 633.3L1420 635.5L1423 635.5L1423 633.7L1426 633.7L1426 634.9L1429 634.9L1429 633.7L1432 633.7L1432 638.8L1435 638.8L1435 640.9L1438 640.9L1438 640.4L1441 640.4L1441 640.9L1444 640.9L1444 639.7L1447 639.7L1447 639.2L1450 639.2L1450 640.9L1453 640.9L1453 643.4L1456 643.4L1456 641.5L1459 641.5L1459 633.2L1462 633.2L1462 637.7L1465 637.7L1465 636.4L1468 636.4L1468 639.7L1471 639.7L1471 640.1L1474 640.1L1474 643.1L1477 643.1L1477 638.5L1480 638.5L1480 642.5L1483 642.5L1483 637.6L1486 637.6L1486 637.0L1489 637.0L1489 628.5L1492 628.5L1492 628.2L1495 628.2L1495 637.7L1498 637.7L1498 639.6L1501 639.6L1501 644.0L1504 644.0L1504 639.5L1507 639.5L1507 643.4L1510 643.4L1510 637.7L1513 637.7L1513 644.1L1516 644.1L1516 638.9L1519 638.9L1519 639.5L1522 639.5L1522 644.4L1525 644.4L1525 629.9L1528 629.9L1528 629.0L1531 629.0L1531 634.8L1534 634.8L1534 637.3L1537 637.3L1537 633.9L1540 633.9L1540 644.0L1543 644.0L1543 637.4L1546 637.4L1546 631.8L1549 631.8L1549 636.7L1552 636.7L1552 639.5L1555 639.5L1555 644.9L1558 644.9L1558 638.2L1561 638.2L1561 641.4L1564 641.4L1564 641.8L1567 641.8L1567 643.7L1570 643.7L1570 644.9L1573 644.9L1573 638.6L1576 638.6L1576 638.1L1579 638.1L1579 641.8L1582 641.8L1582 632.6L1585 632.6L1585 631.7L1588 631.7L1588 632.4L1591 632.4L1591 635.0L1594 635.0L1594 639.5L1597 639.5L1597 637.2L1600 637.2L1600 624.6L1603 624.6L1603 630.3L1606 630.3L1606 635.8L1609 635.8L1609 635.5L1612 635.5L1612 639.2L1615 639.2L1615 639.9L1618 639.9L1618 629.7L1621 629.7L1621 635.9L1624 635.9L1624 635.5L1627 635.5L1627 638.3L1630 638.3L1630 631.6L1633 631.6L1633 632.3L1636 632.3L1636 639.9L1639 639.9L1639 635.9L1642 635.9L1642 640.3L1645 640.3L1645 643.4L1648 643.4L1648 644.2L1651 644.2L1651 637.8L1654 637.8L1654 640.9L1657 640.9L1657 640.5L1660 640.5L1660 639.9L1663 639.9L1663 632.2L1666 632.2L1666 630.0L1669 630.0L1669 631.8L1672 631.8L1672 638.7L1675 638.7L1675 641.0L1678 641.0L1678 693.9L1675 693.9L1675 692.9L1672 692.9L1672 696.0L1669 696.0L1669 698.3L1666 698.3L1666 705.9L1663 705.9L1663 695.5L1660 695.5L1660 697.0L1657 697.0L1657 696.7L1654 696.7L1654 693.4L1651 693.4L1651 691.0L1648 691.0L1648 692.0L1645 692.0L1645 690.9L1642 690.9L1642 694.3L1639 694.3L1639 698.8L1636 698.8L1636 703.4L1633 703.4L1633 702.9L1630 702.9L1630 700.6L1627 700.6L1627 698.2L1624 698.2L1624 700.6L1621 700.6L1621 702.1L1618 702.1L1618 691.0L1615 691.0L1615 697.1L1612 697.1L1612 694.9L1609 694.9L1609 700.3L1606 700.3L1606 706.2L1603 706.2L1603 709.4L1600 709.4L1600 695.3L1597 695.3L1597 698.4L1594 698.4L1594 699.3L1591 699.3L1591 700.3L1588 700.3L1588 697.9L1585 697.9L1585 705.2L1582 705.2L1582 693.8L1579 693.8L1579 694.0L1576 694.0L1576 694.6L1573 694.6L1573 696.1L1570 696.1L1570 693.1L1567 693.1L1567 690.6L1564 690.6L1564 694.9L1561 694.9L1561 690.5L1558 690.5L1558 694.6L1555 694.6L1555 695.9L1552 695.9L1552 697.7L1549 697.7L1549 698.7L1546 698.7L1546 692.7L1543 692.7L1543 689.7L1540 689.7L1540 699.6L1537 699.6L1537 701.8L1534 701.8L1534 699.5L1531 699.5L1531 705.5L1528 705.5L1528 708.2L1525 708.2L1525 689.8L1522 689.8L1522 690.5L1519 690.5L1519 693.0L1516 693.0L1516 693.0L1513 693.0L1513 696.7L1510 696.7L1510 694.5L1507 694.5L1507 689.1L1504 689.1L1504 692.2L1501 692.2L1501 697.3L1498 697.3L1498 702.1L1495 702.1L1495 702.0L1492 702.0L1492 706.3L1489 706.3L1489 696.1L1486 696.1L1486 690.7L1483 690.7L1483 691.5L1480 691.5L1480 696.2L1477 696.2L1477 694.9L1474 694.9L1474 695.9L1471 695.9L1471 696.9L1468 696.9L1468 697.6L1465 697.6L1465 696.6L1462 696.6L1462 701.7L1459 701.7L1459 692.0L1456 692.0L1456 693.2L1453 693.2L1453 691.0L1450 691.0L1450 690.0L1447 690.0L1447 690.2L1444 690.2L1444 693.4L1441 693.4L1441 697.2L1438 697.2L1438 694.5L1435 694.5L1435 700.4L1432 700.4L1432 702.7L1429 702.7L1429 698.1L1426 698.1L1426 696.9L1423 696.9L1423 701.5L1420 701.5L1420 697.9L1417 697.9L1417 701.0L1414 701.0L1414 708.4L1411 708.4L1411 693.3L1408 693.3L1408 695.3L1405 695.3L1405 695.9L1402 695.9L1402 696.3L1399 696.3L1399 702.4L1396 702.4L1396 699.3L1393 699.3L1393 697.7L1390 697.7L1390 696.9L1387 696.9L1387 686.8L1384 686.8L1384 678.2L1381 678.2L1381 682.2L1378 682.2L1378 676.9L1375 676.9L1375 667.0L1372 667.0L1372 667.0L1369 667.0L1369 667.0L1366 667.0L1366 667.0L1363 667.0L1363 667.0L1360 667.0L1360 667.0L1357 667.0L1357 667.0L1354 667.0L1354 667.0L1351 667.0L1351 667.0L1348 667.0L1348 667.0L1345 667.0L1345 667.0L1342 667.0L1342 667.0L1339 667.0L1339 667.0L1336 667.0L1336 667.0L1333 667.0L1333 667.0L1330 667.0L1330 667.0L1327 667.0L1327 667.0L1324 667.0L1324 667.0L1321 667.0L1321 667.0L1318 667.0L1318 667.0L1315 667.0L1315 667.0L1312 667.0L1312 667.0L1309 667.0L1309 667.0L1306 667.0L1306 667.0L1303 667.0L1303 667.0L1300 667.0L1300 667.0L1297 667.0L1297 667.0L1294 667.0L1294 667.0L1291 667.0L1291 667.0L1288 667.0L1288 667.0L1285 667.0L1285 667.0L1282 667.0L1282 667.0L1279 667.0L1279 667.0L1276 667.0L1276 667.0L1273 667.0L1273 667.0L1270 667.0L1270 667.0L1267 667.0L1267 667.0L1264 667.0L1264 667.0L1261 667.0L1261 667.0L1258 667.0L1258 667.0L1255 667.0L1255 667.0L1252 667.0L1252 667.0L1249 667.0L1249 667.0L1246 667.0L1246 667.0L1243 667.0L1243 667.0L1240 667.0L1240 667.0L1237 667.0L1237 667.0L1234 667.0L1234 667.0L1231 667.0L1231 667.0L1228 667.0L1228 667.0L1225 667.0L1225 667.0L1222 667.0L1222 667.0L1219 667.0L1219 667.0L1216 667.0L1216 667.0L1213 667.0L1213 667.0L1210 667.0L1210 667.0L1207 667.0L1207 667.0L1204 667.0L1204 667.0L1201 667.0L1201 667.0L1198 667.0L1198 667.0L1195 667.0L1195 667.0L1192 667.0L1192 667.0L1189 667.0L1189 667.0L1186 667.0L1186 667.0L1183 667.0L1183 667.0L1180 667.0L1180 667.0L1177 667.0L1177 667.0L1174 667.0L1174 667.0L1171 667.0L1171 667.0L1168 667.0L1168 667.0L1165 667.0L1165 667.0L1162 667.0L1162 667.0L1159 667.0L1159 667.0L1156 667.0L1156 667.0L1153 667.0L1153 667.0L1150 667.0Z" fill="#cccccc"/>
<rect x="1468" y="502" width="4" height="210" fill="#cccccc"/>
<rect x="1498" y="502" width="4" height="210" fill="#cccccc"/>
<rect x="1564" y="502" width="4" height="210" fill="#cccccc"/>
</svg>
<div style="position:absolute;left:1150px;top:605px;width:528px;height:2px;background:#a8b4c4;"></div>
<div style="position:absolute;left:1150px;top:607px;width:528px;height:2px;background:#111111;"></div>
<div style="position:absolute;left:1150px;top:672px;width:30px;height:40px;background:#1e2838;"></div>
<div id="R2" style="position:absolute;left:1150.40px;top:679.60px;font-family:'Liberation Sans',sans-serif;font-size:30px;line-height:30px;color:#b8b8b8;white-space:nowrap;transform:scaleX(0.8824);transform-origin:0 0;">R</div>
<svg style="position:absolute;left:1136px;top:488px" width="100" height="40" viewBox="1136 488 100 40"><path d="M1155 490H1232V524H1144V501Z" fill="#e00000"/><path d="M1157 492.5H1226.5V524H1149.5V502.5Z" fill="#f0e4e4"/></svg>
<svg style="position:absolute;left:1138px;top:490px" width="14" height="14" viewBox="1138 490 14 14"><path d="M1138 490H1150L1138 502Z" fill="#c4c4c4"/><path d="M1150.5 490L1138 502.5" stroke="#222" stroke-width="2"/></svg>
<div id="p3" style="position:absolute;left:1149.60px;top:493.20px;font-family:'Liberation Sans',sans-serif;font-size:30px;line-height:30px;color:#a8102a;white-space:nowrap;transform:scaleX(0.9495);transform-origin:0 0;">+3:00</div>
<svg style="position:absolute;left:1258px;top:499px;" width="35" height="33" viewBox="0 0 35 33"><rect x="1.5" y="1.5" width="32" height="30" fill="#6a6a6a" stroke="#a8a8a8" stroke-width="3"/><path d="M6.5 28.5L12.5 9Q14 5 19.5 5.5M8 13.5H20M27.5 12.5L16 27M19.5 14.5L25 27" fill="none" stroke="#111" stroke-width="2.4"/></svg>
<div style="position:absolute;left:706px;top:802px;width:12px;height:72px;background:#186b4c;"></div>
<div style="position:absolute;left:706px;top:820px;width:12px;height:6px;background:#2dd695;"></div>
<div style="position:absolute;left:706px;top:856px;width:12px;height:6px;background:#2dd695;"></div>
<div style="position:absolute;left:722px;top:802px;width:672px;height:72px;background:#54486f;"></div>
<svg style="position:absolute;left:0;top:0" width="1678" height="1208">
<path d="M724 810.0L727 810.0L727 810.0L730 810.0L730 810.0L733 810.0L733 810.0L736 810.0L736 810.0L739 810.0L739 810.0L742 810.0L742 810.0L745 810.0L745 810.0L748 810.0L748 810.0L751 810.0L751 810.0L754 810.0L754 810.0L757 810.0L757 810.0L760 810.0L760 810.0L763 810.0L763 810.0L766 810.0L766 810.0L769 810.0L769 810.0L772 810.0L772 810.0L775 810.0L775 810.0L778 810.0L778 810.0L781 810.0L781 810.0L784 810.0L784 810.0L787 810.0L787 810.0L790 810.0L790 810.0L793 810.0L793 810.0L796 810.0L796 810.0L799 810.0L799 810.0L802 810.0L802 810.0L805 810.0L805 810.0L808 810.0L808 810.0L811 810.0L811 810.0L814 810.0L814 810.0L817 810.0L817 810.0L820 810.0L820 810.0L823 810.0L823 810.0L826 810.0L826 810.0L829 810.0L829 810.0L832 810.0L832 810.0L835 810.0L835 810.0L838 810.0L838 810.0L841 810.0L841 810.0L844 810.0L844 810.0L847 810.0L847 810.0L850 810.0L850 810.0L853 810.0L853 810.0L856 810.0L856 810.0L859 810.0L859 810.0L862 810.0L862 810.0L865 810.0L865 810.0L868 810.0L868 810.0L871 810.0L871 810.0L874 810.0L874 810.0L877 810.0L877 810.0L880 810.0L880 810.0L883 810.0L883 810.0L886 810.0L886 810.0L889 810.0L889 810.0L892 810.0L892 810.0L895 810.0L895 810.0L898 810.0L898 811.5L901 811.5L901 810.5L904 810.5L904 810.0L907 810.0L907 810.0L910 810.0L910 810.5L913 810.5L913 815.5L916 815.5L916 812.5L919 812.5L919 814.5L922 814.5L922 815.5L925 815.5L925 815.5L928 815.5L928 812.5L931 812.5L931 814.5L934 814.5L934 811.5L937 811.5L937 811.5L940 811.5L940 815.5L943 815.5L943 814.5L946 814.5L946 813.5L949 813.5L949 810.0L952 810.0L952 812.5L955 812.5L955 810.0L958 810.0L958 815.5L961 815.5L961 811.5L964 811.5L964 812.5L967 812.5L967 814.5L970 814.5L970 810.0L973 810.0L973 814.5L976 814.5L976 814.5L979 814.5L979 810.0L982 810.0L982 813.5L985 813.5L985 814.5L988 814.5L988 810.5L991 810.5L991 814.5L994 814.5L994 810.5L997 810.5L997 812.5L1000 812.5L1000 815.5L1003 815.5L1003 812.5L1006 812.5L1006 814.5L1009 814.5L1009 815.5L1012 815.5L1012 813.5L1015 813.5L1015 811.5L1018 811.5L1018 815.5L1021 815.5L1021 810.5L1024 810.5L1024 813.5L1027 813.5L1027 813.5L1030 813.5L1030 810.0L1033 810.0L1033 812.5L1036 812.5L1036 813.5L1039 813.5L1039 812.5L1042 812.5L1042 810.5L1045 810.5L1045 815.5L1048 815.5L1048 815.5L1051 815.5L1051 813.5L1054 813.5L1054 812.5L1057 812.5L1057 811.5L1060 811.5L1060 812.5L1063 812.5L1063 812.5L1066 812.5L1066 810.0L1069 810.0L1069 812.5L1072 812.5L1072 810.5L1075 810.5L1075 811.5L1078 811.5L1078 815.5L1081 815.5L1081 814.5L1084 814.5L1084 812.5L1087 812.5L1087 818.0L1090 818.0L1090 818.0L1093 818.0L1093 819.0L1096 819.0L1096 818.0L1099 818.0L1099 819.0L1102 819.0L1102 819.0L1105 819.0L1105 818.0L1108 818.0L1108 818.0L1111 818.0L1111 818.0L1114 818.0L1114 819.0L1117 819.0L1117 818.0L1120 818.0L1120 819.0L1123 819.0L1123 819.0L1126 819.0L1126 818.0L1129 818.0L1129 819.0L1132 819.0L1132 819.0L1135 819.0L1135 817.0L1138 817.0L1138 819.0L1141 819.0L1141 818.0L1144 818.0L1144 817.0L1147 817.0L1147 817.0L1150 817.0L1150 819.0L1153 819.0L1153 819.0L1156 819.0L1156 818.0L1159 818.0L1159 819.0L1162 819.0L1162 820.5L1165 820.5L1165 820.5L1168 820.5L1168 820.5L1171 820.5L1171 820.5L1174 820.5L1174 820.5L1177 820.5L1177 820.5L1180 820.5L1180 820.5L1183 820.5L1183 820.5L1186 820.5L1186 820.5L1189 820.5L1189 820.5L1192 820.5L1192 820.5L1195 820.5L1195 820.5L1198 820.5L1198 820.5L1201 820.5L1201 820.5L1204 820.5L1204 820.5L1207 820.5L1207 820.5L1210 820.5L1210 820.5L1213 820.5L1213 820.5L1216 820.5L1216 820.5L1219 820.5L1219 820.5L1222 820.5L1222 820.5L1225 820.5L1225 820.5L1228 820.5L1228 820.5L1231 820.5L1231 820.5L1234 820.5L1234 820.5L1237 820.5L1237 820.5L1240 820.5L1240 820.5L1243 820.5L1243 820.5L1246 820.5L1246 820.5L1249 820.5L1249 820.5L1252 820.5L1252 820.5L1255 820.5L1255 820.5L1258 820.5L1258 820.5L1261 820.5L1261 820.5L1264 820.5L1264 820.5L1267 820.5L1267 820.5L1270 820.5L1270 820.5L1273 820.5L1273 820.5L1276 820.5L1276 820.5L1279 820.5L1279 820.5L1282 820.5L1282 820.5L1285 820.5L1285 820.5L1288 820.5L1288 820.5L1291 820.5L1291 820.5L1294 820.5L1294 820.5L1297 820.5L1297 820.5L1300 820.5L1300 820.5L1303 820.5L1303 820.5L1306 820.5L1306 820.5L1309 820.5L1309 820.5L1312 820.5L1312 820.5L1315 820.5L1315 820.5L1318 820.5L1318 820.5L1321 820.5L1321 820.5L1324 820.5L1324 820.5L1327 820.5L1327 820.5L1330 820.5L1330 820.5L1333 820.5L1333 820.5L1336 820.5L1336 820.5L1339 820.5L1339 820.5L1342 820.5L1342 820.5L1345 820.5L1345 820.5L1348 820.5L1348 820.5L1351 820.5L1351 820.5L1354 820.5L1354 820.5L1357 820.5L1357 820.5L1360 820.5L1360 820.5L1363 820.5L1363 820.5L1366 820.5L1366 820.5L1369 820.5L1369 820.5L1372 820.5L1372 820.5L1375 820.5L1375 820.5L1378 820.5L1378 820.5L1381 820.5L1381 820.5L1384 820.5L1384 820.5L1387 820.5L1387 820.5L1390 820.5L1390 820.5L1393 820.5L1393 820.5L1396 820.5L1396 826.5L1393 826.5L1393 826.5L1390 826.5L1390 826.5L1387 826.5L1387 826.5L1384 826.5L1384 826.5L1381 826.5L1381 826.5L1378 826.5L1378 826.5L1375 826.5L1375 826.5L1372 826.5L1372 826.5L1369 826.5L1369 826.5L1366 826.5L1366 826.5L1363 826.5L1363 826.5L1360 826.5L1360 826.5L1357 826.5L1357 826.5L1354 826.5L1354 826.5L1351 826.5L1351 826.5L1348 826.5L1348 826.5L1345 826.5L1345 826.5L1342 826.5L1342 826.5L1339 826.5L1339 826.5L1336 826.5L1336 826.5L1333 826.5L1333 826.5L1330 826.5L1330 826.5L1327 826.5L1327 826.5L1324 826.5L1324 826.5L1321 826.5L1321 826.5L1318 826.5L1318 826.5L1315 826.5L1315 826.5L1312 826.5L1312 826.5L1309 826.5L1309 826.5L1306 826.5L1306 826.5L1303 826.5L1303 826.5L1300 826.5L1300 826.5L1297 826.5L1297 826.5L1294 826.5L1294 826.5L1291 826.5L1291 826.5L1288 826.5L1288 826.5L1285 826.5L1285 826.5L1282 826.5L1282 826.5L1279 826.5L1279 826.5L1276 826.5L1276 826.5L1273 826.5L1273 826.5L1270 826.5L1270 826.5L1267 826.5L1267 826.5L1264 826.5L1264 826.5L1261 826.5L1261 826.5L1258 826.5L1258 826.5L1255 826.5L1255 826.5L1252 826.5L1252 826.5L1249 826.5L1249 826.5L1246 826.5L1246 826.5L1243 826.5L1243 826.5L1240 826.5L1240 826.5L1237 826.5L1237 826.5L1234 826.5L1234 826.5L1231 826.5L1231 826.5L1228 826.5L1228 826.5L1225 826.5L1225 826.5L1222 826.5L1222 826.5L1219 826.5L1219 826.5L1216 826.5L1216 826.5L1213 826.5L1213 826.5L1210 826.5L1210 826.5L1207 826.5L1207 826.5L1204 826.5L1204 826.5L1201 826.5L1201 826.5L1198 826.5L1198 826.5L1195 826.5L1195 826.5L1192 826.5L1192 826.5L1189 826.5L1189 826.5L1186 826.5L1186 826.5L1183 826.5L1183 826.5L1180 826.5L1180 826.5L1177 826.5L1177 826.5L1174 826.5L1174 826.5L1171 826.5L1171 826.5L1168 826.5L1168 826.5L1165 826.5L1165 826.5L1162 826.5L1162 830.0L1159 830.0L1159 828.0L1156 828.0L1156 829.0L1153 829.0L1153 830.0L1150 830.0L1150 828.0L1147 828.0L1147 830.0L1144 830.0L1144 829.0L1141 829.0L1141 830.0L1138 830.0L1138 828.0L1135 828.0L1135 828.0L1132 828.0L1132 830.0L1129 830.0L1129 829.0L1126 829.0L1126 830.0L1123 830.0L1123 828.0L1120 828.0L1120 829.0L1117 829.0L1117 829.0L1114 829.0L1114 829.0L1111 829.0L1111 828.0L1108 828.0L1108 830.0L1105 830.0L1105 828.0L1102 828.0L1102 829.0L1099 829.0L1099 829.0L1096 829.0L1096 830.0L1093 830.0L1093 829.0L1090 829.0L1090 830.0L1087 830.0L1087 833.5L1084 833.5L1084 837.5L1081 837.5L1081 837.5L1078 837.5L1078 832.5L1075 832.5L1075 832.5L1072 832.5L1072 831.5L1069 831.5L1069 831.5L1066 831.5L1066 835.5L1063 835.5L1063 833.5L1060 833.5L1060 837.5L1057 837.5L1057 831.5L1054 831.5L1054 837.5L1051 837.5L1051 836.5L1048 836.5L1048 833.5L1045 833.5L1045 832.5L1042 832.5L1042 834.5L1039 834.5L1039 832.5L1036 832.5L1036 836.5L1033 836.5L1033 833.5L1030 833.5L1030 833.5L1027 833.5L1027 831.5L1024 831.5L1024 836.5L1021 836.5L1021 835.5L1018 835.5L1018 835.5L1015 835.5L1015 837.5L1012 837.5L1012 833.5L1009 833.5L1009 833.5L1006 833.5L1006 832.5L1003 832.5L1003 833.5L1000 833.5L1000 833.5L997 833.5L997 832.5L994 832.5L994 832.5L991 832.5L991 836.5L988 836.5L988 835.5L985 835.5L985 833.5L982 833.5L982 832.5L979 832.5L979 832.5L976 832.5L976 837.5L973 837.5L973 831.5L970 831.5L970 831.5L967 831.5L967 832.5L964 832.5L964 835.5L961 835.5L961 832.5L958 832.5L958 837.5L955 837.5L955 832.5L952 832.5L952 837.5L949 837.5L949 832.5L946 832.5L946 834.5L943 834.5L943 836.5L940 836.5L940 832.5L937 832.5L937 831.5L934 831.5L934 834.5L931 834.5L931 837.5L928 837.5L928 833.5L925 833.5L925 832.5L922 832.5L922 836.5L919 836.5L919 837.5L916 837.5L916 837.5L913 837.5L913 835.5L910 835.5L910 836.5L907 836.5L907 836.5L904 836.5L904 833.5L901 833.5L901 833.5L898 833.5L898 837.5L895 837.5L895 837.5L892 837.5L892 837.5L889 837.5L889 837.5L886 837.5L886 837.5L883 837.5L883 837.5L880 837.5L880 837.5L877 837.5L877 837.5L874 837.5L874 837.5L871 837.5L871 837.5L868 837.5L868 837.5L865 837.5L865 837.5L862 837.5L862 837.5L859 837.5L859 837.5L856 837.5L856 837.5L853 837.5L853 837.5L850 837.5L850 837.5L847 837.5L847 837.5L844 837.5L844 837.5L841 837.5L841 837.5L838 837.5L838 837.5L835 837.5L835 837.5L832 837.5L832 837.5L829 837.5L829 837.5L826 837.5L826 837.5L823 837.5L823 837.5L820 837.5L820 837.5L817 837.5L817 837.5L814 837.5L814 837.5L811 837.5L811 837.5L808 837.5L808 837.5L805 837.5L805 837.5L802 837.5L802 837.5L799 837.5L799 837.5L796 837.5L796 837.5L793 837.5L793 837.5L790 837.5L790 837.5L787 837.5L787 837.5L784 837.5L784 837.5L781 837.5L781 837.5L778 837.5L778 837.5L775 837.5L775 837.5L772 837.5L772 837.5L769 837.5L769 837.5L766 837.5L766 837.5L763 837.5L763 837.5L760 837.5L760 837.5L757 837.5L757 837.5L754 837.5L754 837.5L751 837.5L751 837.5L748 837.5L748 837.5L745 837.5L745 837.5L742 837.5L742 837.5L739 837.5L739 837.5L736 837.5L736 837.5L733 837.5L733 837.5L730 837.5L730 837.5L727 837.5L727 837.5L724 837.5Z" fill="#a68ee0"/>
<path d="M724 846.0L727 846.0L727 846.0L730 846.0L730 846.0L733 846.0L733 846.0L736 846.0L736 846.0L739 846.0L739 846.0L742 846.0L742 846.0L745 846.0L745 846.0L748 846.0L748 846.0L751 846.0L751 846.0L754 846.0L754 846.0L757 846.0L757 846.0L760 846.0L760 846.0L763 846.0L763 846.0L766 846.0L766 846.0L769 846.0L769 846.0L772 846.0L772 846.0L775 846.0L775 846.0L778 846.0L778 846.0L781 846.0L781 846.0L784 846.0L784 846.0L787 846.0L787 846.0L790 846.0L790 846.0L793 846.0L793 846.0L796 846.0L796 846.0L799 846.0L799 846.0L802 846.0L802 846.0L805 846.0L805 846.0L808 846.0L808 846.0L811 846.0L811 846.0L814 846.0L814 846.0L817 846.0L817 846.0L820 846.0L820 846.0L823 846.0L823 846.0L826 846.0L826 846.0L829 846.0L829 846.0L832 846.0L832 846.0L835 846.0L835 846.0L838 846.0L838 846.0L841 846.0L841 846.0L844 846.0L844 846.0L847 846.0L847 846.0L850 846.0L850 846.0L853 846.0L853 846.0L856 846.0L856 846.0L859 846.0L859 846.0L862 846.0L862 846.0L865 846.0L865 846.0L868 846.0L868 846.0L871 846.0L871 846.0L874 846.0L874 846.0L877 846.0L877 846.0L880 846.0L880 846.0L883 846.0L883 846.0L886 846.0L886 846.0L889 846.0L889 846.0L892 846.0L892 846.0L895 846.0L895 846.0L898 846.0L898 847.0L901 847.0L901 846.0L904 846.0L904 848.0L907 848.0L907 850.0L910 850.0L910 849.0L913 849.0L913 851.0L916 851.0L916 848.0L919 848.0L919 850.0L922 850.0L922 847.0L925 847.0L925 850.0L928 850.0L928 848.0L931 848.0L931 846.0L934 846.0L934 849.0L937 849.0L937 849.0L940 849.0L940 848.0L943 848.0L943 850.0L946 850.0L946 848.0L949 848.0L949 847.0L952 847.0L952 846.0L955 846.0L955 846.0L958 846.0L958 850.0L961 850.0L961 848.0L964 848.0L964 847.0L967 847.0L967 847.0L970 847.0L970 847.0L973 847.0L973 851.0L976 851.0L976 846.0L979 846.0L979 849.0L982 849.0L982 847.0L985 847.0L985 851.0L988 851.0L988 849.0L991 849.0L991 847.0L994 847.0L994 846.0L997 846.0L997 846.0L1000 846.0L1000 849.0L1003 849.0L1003 846.0L1006 846.0L1006 849.0L1009 849.0L1009 846.0L1012 846.0L1012 847.0L1015 847.0L1015 851.0L1018 851.0L1018 847.0L1021 847.0L1021 849.0L1024 849.0L1024 846.0L1027 846.0L1027 848.0L1030 848.0L1030 846.0L1033 846.0L1033 846.0L1036 846.0L1036 846.0L1039 846.0L1039 849.0L1042 849.0L1042 846.0L1045 846.0L1045 846.0L1048 846.0L1048 848.0L1051 848.0L1051 846.0L1054 846.0L1054 846.0L1057 846.0L1057 846.0L1060 846.0L1060 849.0L1063 849.0L1063 847.0L1066 847.0L1066 847.0L1069 847.0L1069 850.0L1072 850.0L1072 849.0L1075 849.0L1075 848.0L1078 848.0L1078 846.0L1081 846.0L1081 846.0L1084 846.0L1084 846.0L1087 846.0L1087 854.5L1090 854.5L1090 852.5L1093 852.5L1093 853.5L1096 853.5L1096 854.5L1099 854.5L1099 854.5L1102 854.5L1102 852.5L1105 852.5L1105 854.5L1108 854.5L1108 854.5L1111 854.5L1111 854.5L1114 854.5L1114 854.5L1117 854.5L1117 854.5L1120 854.5L1120 854.5L1123 854.5L1123 854.5L1126 854.5L1126 854.5L1129 854.5L1129 854.5L1132 854.5L1132 852.5L1135 852.5L1135 852.5L1138 852.5L1138 854.5L1141 854.5L1141 854.5L1144 854.5L1144 853.5L1147 853.5L1147 853.5L1150 853.5L1150 853.5L1153 853.5L1153 854.5L1156 854.5L1156 853.5L1159 853.5L1159 853.5L1162 853.5L1162 856.0L1165 856.0L1165 856.0L1168 856.0L1168 856.0L1171 856.0L1171 856.0L1174 856.0L1174 856.0L1177 856.0L1177 856.0L1180 856.0L1180 856.0L1183 856.0L1183 856.0L1186 856.0L1186 856.0L1189 856.0L1189 856.0L1192 856.0L1192 856.0L1195 856.0L1195 856.0L1198 856.0L1198 856.0L1201 856.0L1201 856.0L1204 856.0L1204 856.0L1207 856.0L1207 856.0L1210 856.0L1210 856.0L1213 856.0L1213 856.0L1216 856.0L1216 856.0L1219 856.0L1219 856.0L1222 856.0L1222 856.0L1225 856.0L1225 856.0L1228 856.0L1228 856.0L1231 856.0L1231 856.0L1234 856.0L1234 856.0L1237 856.0L1237 856.0L1240 856.0L1240 856.0L1243 856.0L1243 856.0L1246 856.0L1246 856.0L1249 856.0L1249 856.0L1252 856.0L1252 856.0L1255 856.0L1255 856.0L1258 856.0L1258 856.0L1261 856.0L1261 856.0L1264 856.0L1264 856.0L1267 856.0L1267 856.0L1270 856.0L1270 856.0L1273 856.0L1273 856.0L1276 856.0L1276 856.0L1279 856.0L1279 856.0L1282 856.0L1282 856.0L1285 856.0L1285 856.0L1288 856.0L1288 856.0L1291 856.0L1291 856.0L1294 856.0L1294 856.0L1297 856.0L1297 856.0L1300 856.0L1300 856.0L1303 856.0L1303 856.0L1306 856.0L1306 856.0L1309 856.0L1309 856.0L1312 856.0L1312 856.0L1315 856.0L1315 856.0L1318 856.0L1318 856.0L1321 856.0L1321 856.0L1324 856.0L1324 856.0L1327 856.0L1327 856.0L1330 856.0L1330 856.0L1333 856.0L1333 856.0L1336 856.0L1336 856.0L1339 856.0L1339 856.0L1342 856.0L1342 856.0L1345 856.0L1345 856.0L1348 856.0L1348 856.0L1351 856.0L1351 856.0L1354 856.0L1354 856.0L1357 856.0L1357 856.0L1360 856.0L1360 856.0L1363 856.0L1363 856.0L1366 856.0L1366 856.0L1369 856.0L1369 856.0L1372 856.0L1372 856.0L1375 856.0L1375 856.0L1378 856.0L1378 856.0L1381 856.0L1381 856.0L1384 856.0L1384 856.0L1387 856.0L1387 856.0L1390 856.0L1390 856.0L1393 856.0L1393 856.0L1396 856.0L1396 862.0L1393 862.0L1393 862.0L1390 862.0L1390 862.0L1387 862.0L1387 862.0L1384 862.0L1384 862.0L1381 862.0L1381 862.0L1378 862.0L1378 862.0L1375 862.0L1375 862.0L1372 862.0L1372 862.0L1369 862.0L1369 862.0L1366 862.0L1366 862.0L1363 862.0L1363 862.0L1360 862.0L1360 862.0L1357 862.0L1357 862.0L1354 862.0L1354 862.0L1351 862.0L1351 862.0L1348 862.0L1348 862.0L1345 862.0L1345 862.0L1342 862.0L1342 862.0L1339 862.0L1339 862.0L1336 862.0L1336 862.0L1333 862.0L1333 862.0L1330 862.0L1330 862.0L1327 862.0L1327 862.0L1324 862.0L1324 862.0L1321 862.0L1321 862.0L1318 862.0L1318 862.0L1315 862.0L1315 862.0L1312 862.0L1312 862.0L1309 862.0L1309 862.0L1306 862.0L1306 862.0L1303 862.0L1303 862.0L1300 862.0L1300 862.0L1297 862.0L1297 862.0L1294 862.0L1294 862.0L1291 862.0L1291 862.0L1288 862.0L1288 862.0L1285 862.0L1285 862.0L1282 862.0L1282 862.0L1279 862.0L1279 862.0L1276 862.0L1276 862.0L1273 862.0L1273 862.0L1270 862.0L1270 862.0L1267 862.0L1267 862.0L1264 862.0L1264 862.0L1261 862.0L1261 862.0L1258 862.0L1258 862.0L1255 862.0L1255 862.0L1252 862.0L1252 862.0L1249 862.0L1249 862.0L1246 862.0L1246 862.0L1243 862.0L1243 862.0L1240 862.0L1240 862.0L1237 862.0L1237 862.0L1234 862.0L1234 862.0L1231 862.0L1231 862.0L1228 862.0L1228 862.0L1225 862.0L1225 862.0L1222 862.0L1222 862.0L1219 862.0L1219 862.0L1216 862.0L1216 862.0L1213 862.0L1213 862.0L1210 862.0L1210 862.0L1207 862.0L1207 862.0L1204 862.0L1204 862.0L1201 862.0L1201 862.0L1198 862.0L1198 862.0L1195 862.0L1195 862.0L1192 862.0L1192 862.0L1189 862.0L1189 862.0L1186 862.0L1186 862.0L1183 862.0L1183 862.0L1180 862.0L1180 862.0L1177 862.0L1177 862.0L1174 862.0L1174 862.0L1171 862.0L1171 862.0L1168 862.0L1168 862.0L1165 862.0L1165 862.0L1162 862.0L1162 863.5L1159 863.5L1159 863.5L1156 863.5L1156 865.5L1153 865.5L1153 864.5L1150 864.5L1150 864.5L1147 864.5L1147 863.5L1144 863.5L1144 863.5L1141 863.5L1141 865.5L1138 865.5L1138 865.5L1135 865.5L1135 864.5L1132 864.5L1132 864.5L1129 864.5L1129 865.5L1126 865.5L1126 864.5L1123 864.5L1123 864.5L1120 864.5L1120 863.5L1117 863.5L1117 863.5L1114 863.5L1114 864.5L1111 864.5L1111 865.5L1108 865.5L1108 863.5L1105 863.5L1105 865.5L1102 865.5L1102 865.5L1099 865.5L1099 863.5L1096 863.5L1096 865.5L1093 865.5L1093 864.5L1090 864.5L1090 865.5L1087 865.5L1087 870.0L1084 870.0L1084 872.0L1081 872.0L1081 867.0L1078 867.0L1078 869.0L1075 869.0L1075 873.0L1072 873.0L1072 873.0L1069 873.0L1069 868.0L1066 868.0L1066 868.0L1063 868.0L1063 869.0L1060 869.0L1060 870.0L1057 870.0L1057 873.0L1054 873.0L1054 868.0L1051 868.0L1051 869.0L1048 869.0L1048 873.0L1045 873.0L1045 869.0L1042 869.0L1042 869.0L1039 869.0L1039 869.0L1036 869.0L1036 872.0L1033 872.0L1033 871.0L1030 871.0L1030 869.0L1027 869.0L1027 869.0L1024 869.0L1024 869.0L1021 869.0L1021 873.0L1018 873.0L1018 870.0L1015 870.0L1015 873.0L1012 873.0L1012 868.0L1009 868.0L1009 869.0L1006 869.0L1006 872.0L1003 872.0L1003 873.0L1000 873.0L1000 870.0L997 870.0L997 869.0L994 869.0L994 872.0L991 872.0L991 869.0L988 869.0L988 873.0L985 873.0L985 872.0L982 872.0L982 872.0L979 872.0L979 873.0L976 873.0L976 873.0L973 873.0L973 869.0L970 869.0L970 873.0L967 873.0L967 873.0L964 873.0L964 869.0L961 869.0L961 867.0L958 867.0L958 869.0L955 869.0L955 870.0L952 870.0L952 868.0L949 868.0L949 873.0L946 873.0L946 867.0L943 867.0L943 870.0L940 870.0L940 869.0L937 869.0L937 870.0L934 870.0L934 872.0L931 872.0L931 870.0L928 870.0L928 871.0L925 871.0L925 873.0L922 873.0L922 870.0L919 870.0L919 869.0L916 869.0L916 873.0L913 873.0L913 868.0L910 868.0L910 870.0L907 870.0L907 867.0L904 867.0L904 873.0L901 873.0L901 868.0L898 868.0L898 873.0L895 873.0L895 873.0L892 873.0L892 873.0L889 873.0L889 873.0L886 873.0L886 873.0L883 873.0L883 873.0L880 873.0L880 873.0L877 873.0L877 873.0L874 873.0L874 873.0L871 873.0L871 873.0L868 873.0L868 873.0L865 873.0L865 873.0L862 873.0L862 873.0L859 873.0L859 873.0L856 873.0L856 873.0L853 873.0L853 873.0L850 873.0L850 873.0L847 873.0L847 873.0L844 873.0L844 873.0L841 873.0L841 873.0L838 873.0L838 873.0L835 873.0L835 873.0L832 873.0L832 873.0L829 873.0L829 873.0L826 873.0L826 873.0L823 873.0L823 873.0L820 873.0L820 873.0L817 873.0L817 873.0L814 873.0L814 873.0L811 873.0L811 873.0L808 873.0L808 873.0L805 873.0L805 873.0L802 873.0L802 873.0L799 873.0L799 873.0L796 873.0L796 873.0L793 873.0L793 873.0L790 873.0L790 873.0L787 873.0L787 873.0L784 873.0L784 873.0L781 873.0L781 873.0L778 873.0L778 873.0L775 873.0L775 873.0L772 873.0L772 873.0L769 873.0L769 873.0L766 873.0L766 873.0L763 873.0L763 873.0L760 873.0L760 873.0L757 873.0L757 873.0L754 873.0L754 873.0L751 873.0L751 873.0L748 873.0L748 873.0L745 873.0L745 873.0L742 873.0L742 873.0L739 873.0L739 873.0L736 873.0L736 873.0L733 873.0L733 873.0L730 873.0L730 873.0L727 873.0L727 873.0L724 873.0Z" fill="#a68ee0"/>
</svg>
<div style="position:absolute;left:722px;top:802px;width:2px;height:72px;background:#c0b0e8;"></div>
<svg style="position:absolute;left:752px;top:811px;" width="35" height="33" viewBox="0 0 35 33"><rect x="1.5" y="1.5" width="32" height="30" fill="#f0c000" stroke="#a8a8a8" stroke-width="3"/><path d="M6.5 28.5L12.5 9Q14 5 19.5 5.5M8 13.5H20M27.5 12.5L16 27M19.5 14.5L25 27" fill="none" stroke="#111" stroke-width="2.4"/></svg>
<div style="position:absolute;left:1036px;top:876px;width:186px;height:72px;background:#394d68;"></div>
<div style="position:absolute;left:1036px;top:876px;width:4px;height:72px;background:#8090a8;"></div>
<div style="position:absolute;left:1036px;top:912px;width:186px;height:6px;background:#6f98cc;"></div>
<div style="position:absolute;left:1222px;top:876px;width:4px;height:72px;background:#2c2c2c;"></div>
<svg style="position:absolute;left:1066px;top:884px;" width="35" height="33" viewBox="0 0 35 33"><rect x="1.5" y="1.5" width="32" height="30" fill="#18a018" stroke="#a8a8a8" stroke-width="3"/><path d="M6.5 28.5L12.5 9Q14 5 19.5 5.5M8 13.5H20M27.5 12.5L16 27M19.5 14.5L25 27" fill="none" stroke="#111" stroke-width="2.4"/></svg>
<div style="position:absolute;left:706px;top:952px;width:574px;height:72px;background:#186b4c;"></div>
<div style="position:absolute;left:1280px;top:952px;width:3px;height:72px;background:#2c2c2c;"></div>
<svg style="position:absolute;left:0;top:0" width="1678" height="1208">
<path d="M706 970.5L709 970.5L709 969.7L712 969.7L712 970.0L715 970.0L715 971.2L718 971.2L718 971.2L721 971.2L721 971.1L724 971.1L724 970.3L727 970.3L727 971.0L730 971.0L730 969.8L733 969.8L733 969.9L736 969.9L736 969.0L739 969.0L739 969.2L742 969.2L742 971.0L745 971.0L745 970.6L748 970.6L748 970.9L751 970.9L751 969.8L754 969.8L754 970.0L757 970.0L757 971.2L760 971.2L760 969.7L763 969.7L763 970.5L766 970.5L766 970.2L769 970.2L769 969.4L772 969.4L772 970.7L775 970.7L775 970.0L778 970.0L778 969.5L781 969.5L781 968.9L784 968.9L784 970.3L787 970.3L787 970.9L790 970.9L790 971.2L793 971.2L793 969.5L796 969.5L796 969.2L799 969.2L799 969.6L802 969.6L802 969.9L805 969.9L805 969.3L808 969.3L808 970.2L811 970.2L811 971.2L814 971.2L814 969.7L817 969.7L817 969.3L820 969.3L820 970.4L823 970.4L823 971.2L826 971.2L826 970.9L829 970.9L829 971.2L832 971.2L832 971.0L835 971.0L835 970.4L838 970.4L838 971.1L841 971.1L841 970.0L844 970.0L844 969.3L847 969.3L847 970.6L850 970.6L850 970.4L853 970.4L853 969.0L856 969.0L856 970.9L859 970.9L859 970.7L862 970.7L862 969.9L865 969.9L865 971.3L868 971.3L868 970.4L871 970.4L871 969.0L874 969.0L874 970.1L877 970.1L877 969.7L880 969.7L880 966.3L883 966.3L883 962.8L886 962.8L886 963.8L889 963.8L889 964.5L892 964.5L892 964.6L895 964.6L895 964.2L898 964.2L898 963.9L901 963.9L901 964.7L904 964.7L904 964.5L907 964.5L907 964.6L910 964.6L910 963.2L913 963.2L913 964.1L916 964.1L916 963.8L919 963.8L919 962.7L922 962.7L922 965.0L925 965.0L925 969.5L928 969.5L928 970.5L931 970.5L931 967.4L934 967.4L934 964.8L937 964.8L937 963.4L940 963.4L940 963.4L943 963.4L943 963.4L946 963.4L946 962.6L949 962.6L949 964.1L952 964.1L952 964.3L955 964.3L955 963.4L958 963.4L958 963.9L961 963.9L961 962.8L964 962.8L964 962.8L967 962.8L967 967.4L970 967.4L970 970.8L973 970.8L973 970.4L976 970.4L976 971.2L979 971.2L979 970.7L982 970.7L982 969.0L985 969.0L985 969.1L988 969.1L988 969.0L991 969.0L991 970.8L994 970.8L994 970.8L997 970.8L997 969.8L1000 969.8L1000 969.3L1003 969.3L1003 969.7L1006 969.7L1006 971.1L1009 971.1L1009 969.1L1012 969.1L1012 969.5L1015 969.5L1015 970.9L1018 970.9L1018 970.5L1021 970.5L1021 969.0L1024 969.0L1024 970.3L1027 970.3L1027 969.6L1030 969.6L1030 971.0L1033 971.0L1033 969.1L1036 969.1L1036 970.9L1039 970.9L1039 968.9L1042 968.9L1042 970.5L1045 970.5L1045 971.0L1048 971.0L1048 969.0L1051 969.0L1051 970.0L1054 970.0L1054 970.3L1057 970.3L1057 969.3L1060 969.3L1060 970.7L1063 970.7L1063 970.7L1066 970.7L1066 970.7L1069 970.7L1069 971.0L1072 971.0L1072 970.5L1075 970.5L1075 969.9L1078 969.9L1078 970.3L1081 970.3L1081 970.1L1084 970.1L1084 969.6L1087 969.6L1087 966.0L1090 966.0L1090 964.7L1093 964.7L1093 964.3L1096 964.3L1096 963.0L1099 963.0L1099 963.9L1102 963.9L1102 963.4L1105 963.4L1105 964.4L1108 964.4L1108 964.1L1111 964.1L1111 962.8L1114 962.8L1114 963.4L1117 963.4L1117 962.5L1120 962.5L1120 963.2L1123 963.2L1123 963.5L1126 963.5L1126 965.9L1129 965.9L1129 970.2L1132 970.2L1132 969.6L1135 969.6L1135 969.0L1138 969.0L1138 970.0L1141 970.0L1141 969.3L1144 969.3L1144 971.0L1147 971.0L1147 971.1L1150 971.1L1150 971.1L1153 971.1L1153 969.4L1156 969.4L1156 970.9L1159 970.9L1159 969.7L1162 969.7L1162 969.2L1165 969.2L1165 970.8L1168 970.8L1168 970.3L1171 970.3L1171 968.9L1174 968.9L1174 970.9L1177 970.9L1177 970.1L1180 970.1L1180 970.8L1183 970.8L1183 969.6L1186 969.6L1186 970.0L1189 970.0L1189 971.3L1192 971.3L1192 969.8L1195 969.8L1195 971.1L1198 971.1L1198 969.4L1201 969.4L1201 971.0L1204 971.0L1204 971.2L1207 971.2L1207 970.7L1210 970.7L1210 970.3L1213 970.3L1213 969.3L1216 969.3L1216 970.9L1219 970.9L1219 969.9L1222 969.9L1222 971.1L1225 971.1L1225 969.6L1228 969.6L1228 970.7L1231 970.7L1231 963.2L1234 963.2L1234 964.5L1237 964.5L1237 964.5L1240 964.5L1240 965.4L1243 965.4L1243 970.0L1246 970.0L1246 970.7L1249 970.7L1249 970.0L1252 970.0L1252 971.0L1255 971.0L1255 971.2L1258 971.2L1258 970.6L1261 970.6L1261 969.5L1264 969.5L1264 970.1L1267 970.1L1267 970.5L1270 970.5L1270 970.7L1273 970.7L1273 969.5L1276 969.5L1276 970.8L1279 970.8L1279 969.1L1280 969.1L1280 976.0L1279 976.0L1279 976.8L1276 976.8L1276 977.0L1273 977.0L1273 975.7L1270 975.7L1270 975.7L1267 975.7L1267 976.1L1264 976.1L1264 976.4L1261 976.4L1261 976.4L1258 976.4L1258 976.2L1255 976.2L1255 976.1L1252 976.1L1252 976.3L1249 976.3L1249 976.0L1246 976.0L1246 977.9L1243 977.9L1243 981.4L1240 981.4L1240 984.4L1237 984.4L1237 984.4L1234 984.4L1234 984.2L1231 984.2L1231 978.4L1228 978.4L1228 976.7L1225 976.7L1225 975.8L1222 975.8L1222 977.4L1219 977.4L1219 977.9L1216 977.9L1216 976.3L1213 976.3L1213 977.9L1210 977.9L1210 976.0L1207 976.0L1207 977.6L1204 977.6L1204 976.3L1201 976.3L1201 978.0L1198 978.0L1198 978.1L1195 978.1L1195 976.9L1192 976.9L1192 976.5L1189 976.5L1189 976.8L1186 976.8L1186 975.7L1183 975.7L1183 976.5L1180 976.5L1180 976.5L1177 976.5L1177 976.7L1174 976.7L1174 977.7L1171 977.7L1171 976.9L1168 976.9L1168 978.0L1165 978.0L1165 978.0L1162 978.0L1162 976.0L1159 976.0L1159 977.4L1156 977.4L1156 977.9L1153 977.9L1153 977.3L1150 977.3L1150 976.3L1147 976.3L1147 976.8L1144 976.8L1144 976.0L1141 976.0L1141 978.0L1138 978.0L1138 976.3L1135 976.3L1135 977.8L1132 977.8L1132 978.0L1129 978.0L1129 981.2L1126 981.2L1126 984.0L1123 984.0L1123 983.5L1120 983.5L1120 983.4L1117 983.4L1117 984.1L1114 984.1L1114 983.5L1111 983.5L1111 983.0L1108 983.0L1108 983.6L1105 983.6L1105 984.2L1102 984.2L1102 983.5L1099 983.5L1099 983.6L1096 983.6L1096 983.4L1093 983.4L1093 984.2L1090 984.2L1090 980.4L1087 980.4L1087 976.1L1084 976.1L1084 977.0L1081 977.0L1081 977.9L1078 977.9L1078 977.9L1075 977.9L1075 976.8L1072 976.8L1072 977.9L1069 977.9L1069 976.7L1066 976.7L1066 977.1L1063 977.1L1063 976.4L1060 976.4L1060 976.2L1057 976.2L1057 977.8L1054 977.8L1054 977.9L1051 977.9L1051 977.3L1048 977.3L1048 975.7L1045 975.7L1045 977.0L1042 977.0L1042 977.3L1039 977.3L1039 977.7L1036 977.7L1036 977.6L1033 977.6L1033 976.1L1030 976.1L1030 976.1L1027 976.1L1027 978.0L1024 978.0L1024 976.7L1021 976.7L1021 977.6L1018 977.6L1018 977.6L1015 977.6L1015 976.8L1012 976.8L1012 977.6L1009 977.6L1009 977.3L1006 977.3L1006 977.6L1003 977.6L1003 976.9L1000 976.9L1000 977.9L997 977.9L997 976.2L994 976.2L994 976.2L991 976.2L991 976.6L988 976.6L988 978.1L985 978.1L985 976.8L982 976.8L982 977.4L979 977.4L979 976.4L976 976.4L976 975.8L973 975.8L973 976.9L970 976.9L970 979.4L967 979.4L967 984.1L964 984.1L964 984.7L961 984.7L961 982.8L958 982.8L958 984.2L955 984.2L955 984.2L952 984.2L952 983.2L949 983.2L949 984.0L946 984.0L946 984.6L943 984.6L943 982.4L940 982.4L940 982.7L937 982.7L937 984.4L934 984.4L934 978.0L931 978.0L931 976.3L928 976.3L928 977.6L925 977.6L925 982.1L922 982.1L922 984.7L919 984.7L919 982.6L916 982.6L916 983.1L913 983.1L913 982.7L910 982.7L910 984.4L907 984.4L907 983.2L904 983.2L904 982.7L901 982.7L901 982.4L898 982.4L898 982.7L895 982.7L895 982.5L892 982.5L892 983.8L889 983.8L889 983.3L886 983.3L886 984.0L883 984.0L883 980.4L880 980.4L880 975.8L877 975.8L877 977.2L874 977.2L874 977.4L871 977.4L871 977.1L868 977.1L868 976.7L865 976.7L865 976.3L862 976.3L862 976.9L859 976.9L859 976.3L856 976.3L856 976.1L853 976.1L853 977.8L850 977.8L850 976.7L847 976.7L847 977.8L844 977.8L844 977.8L841 977.8L841 976.8L838 976.8L838 977.8L835 977.8L835 976.3L832 976.3L832 977.5L829 977.5L829 976.0L826 976.0L826 976.8L823 976.8L823 977.3L820 977.3L820 976.4L817 976.4L817 978.1L814 978.1L814 977.4L811 977.4L811 977.3L808 977.3L808 978.0L805 978.0L805 976.8L802 976.8L802 977.1L799 977.1L799 976.5L796 976.5L796 977.1L793 977.1L793 977.3L790 977.3L790 976.9L787 976.9L787 977.5L784 977.5L784 976.0L781 976.0L781 976.4L778 976.4L778 977.8L775 977.8L775 977.1L772 977.1L772 977.4L769 977.4L769 976.4L766 976.4L766 977.1L763 977.1L763 976.7L760 976.7L760 976.2L757 976.2L757 975.9L754 975.9L754 976.6L751 976.6L751 977.1L748 977.1L748 977.7L745 977.7L745 976.0L742 976.0L742 976.4L739 976.4L739 975.8L736 975.8L736 976.7L733 976.7L733 978.0L730 978.0L730 976.2L727 976.2L727 977.7L724 977.7L724 975.9L721 975.9L721 976.7L718 976.7L718 976.9L715 976.9L715 976.6L712 976.6L712 975.9L709 975.9L709 976.1L706 976.1Z" fill="#2dd695"/>
<path d="M706 1005.0L709 1005.0L709 1005.6L712 1005.6L712 1005.8L715 1005.8L715 1005.2L718 1005.2L718 1005.9L721 1005.9L721 1005.2L724 1005.2L724 1005.8L727 1005.8L727 1006.5L730 1006.5L730 1006.5L733 1006.5L733 1006.1L736 1006.1L736 1006.4L739 1006.4L739 1004.9L742 1004.9L742 1006.0L745 1006.0L745 1006.0L748 1006.0L748 1006.3L751 1006.3L751 1006.1L754 1006.1L754 1004.7L757 1004.7L757 1006.1L760 1006.1L760 1006.0L763 1006.0L763 1006.6L766 1006.6L766 1005.7L769 1005.7L769 1006.2L772 1006.2L772 1006.6L775 1006.6L775 1006.4L778 1006.4L778 1006.5L781 1006.5L781 1006.0L784 1006.0L784 1005.4L787 1005.4L787 1005.1L790 1005.1L790 1005.2L793 1005.2L793 1005.8L796 1005.8L796 1004.6L799 1004.6L799 1005.2L802 1005.2L802 1006.5L805 1006.5L805 1004.8L808 1004.8L808 1005.1L811 1005.1L811 1006.3L814 1006.3L814 1005.6L817 1005.6L817 1005.0L820 1005.0L820 1005.4L823 1005.4L823 1005.2L826 1005.2L826 1006.1L829 1006.1L829 1006.3L832 1006.3L832 1006.4L835 1006.4L835 1005.5L838 1005.5L838 1005.3L841 1005.3L841 1005.6L844 1005.6L844 1005.0L847 1005.0L847 1005.6L850 1005.6L850 1005.3L853 1005.3L853 1005.1L856 1005.1L856 1006.5L859 1006.5L859 1005.1L862 1005.1L862 1005.1L865 1005.1L865 1005.6L868 1005.6L868 1005.6L871 1005.6L871 1005.1L874 1005.1L874 1005.3L877 1005.3L877 1006.3L880 1006.3L880 1002.3L883 1002.3L883 999.1L886 999.1L886 999.9L889 999.9L889 998.7L892 998.7L892 998.6L895 998.6L895 999.0L898 999.0L898 999.1L901 999.1L901 998.2L904 998.2L904 998.0L907 998.0L907 1000.0L910 1000.0L910 998.4L913 998.4L913 999.1L916 999.1L916 999.6L919 999.6L919 999.6L922 999.6L922 1001.1L925 1001.1L925 1003.1L928 1003.1L928 1005.0L931 1005.0L931 1002.9L934 1002.9L934 999.7L937 999.7L937 999.0L940 999.0L940 1000.0L943 1000.0L943 999.1L946 999.1L946 999.7L949 999.7L949 999.4L952 999.4L952 1000.0L955 1000.0L955 998.3L958 998.3L958 998.1L961 998.1L961 998.2L964 998.2L964 999.4L967 999.4L967 1002.7L970 1002.7L970 1005.9L973 1005.9L973 1006.0L976 1006.0L976 1006.4L979 1006.4L979 1006.0L982 1006.0L982 1006.1L985 1006.1L985 1005.6L988 1005.6L988 1005.9L991 1005.9L991 1004.8L994 1004.8L994 1005.3L997 1005.3L997 1004.7L1000 1004.7L1000 1005.2L1003 1005.2L1003 1005.1L1006 1005.1L1006 1005.1L1009 1005.1L1009 1006.0L1012 1006.0L1012 1004.7L1015 1004.7L1015 1005.7L1018 1005.7L1018 1006.0L1021 1006.0L1021 1004.6L1024 1004.6L1024 1005.3L1027 1005.3L1027 1005.5L1030 1005.5L1030 1006.3L1033 1006.3L1033 1006.2L1036 1006.2L1036 1005.6L1039 1005.6L1039 1004.8L1042 1004.8L1042 1005.7L1045 1005.7L1045 1006.2L1048 1006.2L1048 1005.9L1051 1005.9L1051 1006.1L1054 1006.1L1054 1005.5L1057 1005.5L1057 1005.1L1060 1005.1L1060 1005.8L1063 1005.8L1063 1005.8L1066 1005.8L1066 1006.5L1069 1006.5L1069 1004.7L1072 1004.7L1072 1005.6L1075 1005.6L1075 1004.9L1078 1004.9L1078 1006.1L1081 1006.1L1081 1005.8L1084 1005.8L1084 1004.3L1087 1004.3L1087 1000.6L1090 1000.6L1090 999.9L1093 999.9L1093 998.2L1096 998.2L1096 998.8L1099 998.8L1099 999.2L1102 999.2L1102 998.3L1105 998.3L1105 998.1L1108 998.1L1108 999.8L1111 999.8L1111 999.0L1114 999.0L1114 998.1L1117 998.1L1117 998.7L1120 998.7L1120 999.1L1123 999.1L1123 999.9L1126 999.9L1126 1001.9L1129 1001.9L1129 1005.3L1132 1005.3L1132 1006.3L1135 1006.3L1135 1005.3L1138 1005.3L1138 1006.4L1141 1006.4L1141 1005.6L1144 1005.6L1144 1005.8L1147 1005.8L1147 1005.4L1150 1005.4L1150 1006.0L1153 1006.0L1153 1004.7L1156 1004.7L1156 1004.8L1159 1004.8L1159 1006.1L1162 1006.1L1162 1004.7L1165 1004.7L1165 1006.0L1168 1006.0L1168 1005.6L1171 1005.6L1171 1005.8L1174 1005.8L1174 1005.3L1177 1005.3L1177 1006.1L1180 1006.1L1180 1005.9L1183 1005.9L1183 1005.2L1186 1005.2L1186 1005.0L1189 1005.0L1189 1005.6L1192 1005.6L1192 1004.7L1195 1004.7L1195 1005.0L1198 1005.0L1198 1006.2L1201 1006.2L1201 1006.0L1204 1006.0L1204 1005.6L1207 1005.6L1207 1006.2L1210 1006.2L1210 1005.3L1213 1005.3L1213 1006.3L1216 1006.3L1216 1006.2L1219 1006.2L1219 1006.3L1222 1006.3L1222 1006.5L1225 1006.5L1225 1004.8L1228 1004.8L1228 1004.7L1231 1004.7L1231 998.1L1234 998.1L1234 999.6L1237 999.6L1237 998.5L1240 998.5L1240 1000.4L1243 1000.4L1243 1005.9L1246 1005.9L1246 1006.3L1249 1006.3L1249 1006.0L1252 1006.0L1252 1004.7L1255 1004.7L1255 1004.7L1258 1004.7L1258 1005.9L1261 1005.9L1261 1005.0L1264 1005.0L1264 1006.5L1267 1006.5L1267 1005.9L1270 1005.9L1270 1006.2L1273 1006.2L1273 1004.8L1276 1004.8L1276 1005.8L1279 1005.8L1279 1005.1L1280 1005.1L1280 1011.5L1279 1011.5L1279 1013.0L1276 1013.0L1276 1011.5L1273 1011.5L1273 1012.1L1270 1012.1L1270 1013.2L1267 1013.2L1267 1012.3L1264 1012.3L1264 1012.3L1261 1012.3L1261 1013.0L1258 1013.0L1258 1011.8L1255 1011.8L1255 1011.6L1252 1011.6L1252 1012.1L1249 1012.1L1249 1011.4L1246 1011.4L1246 1012.1L1243 1012.1L1243 1017.0L1240 1017.0L1240 1018.1L1237 1018.1L1237 1019.9L1234 1019.9L1234 1018.7L1231 1018.7L1231 1013.8L1228 1013.8L1228 1013.2L1225 1013.2L1225 1012.2L1222 1012.2L1222 1011.5L1219 1011.5L1219 1013.3L1216 1013.3L1216 1012.2L1213 1012.2L1213 1013.3L1210 1013.3L1210 1012.2L1207 1012.2L1207 1011.8L1204 1011.8L1204 1013.3L1201 1013.3L1201 1012.9L1198 1012.9L1198 1011.9L1195 1011.9L1195 1012.0L1192 1012.0L1192 1011.8L1189 1011.8L1189 1012.9L1186 1012.9L1186 1011.8L1183 1011.8L1183 1012.2L1180 1012.2L1180 1011.5L1177 1011.5L1177 1013.3L1174 1013.3L1174 1011.9L1171 1011.9L1171 1012.7L1168 1012.7L1168 1011.4L1165 1011.4L1165 1012.8L1162 1012.8L1162 1011.9L1159 1011.9L1159 1012.4L1156 1012.4L1156 1012.7L1153 1012.7L1153 1012.3L1150 1012.3L1150 1011.4L1147 1011.4L1147 1011.8L1144 1011.8L1144 1012.6L1141 1012.6L1141 1011.5L1138 1011.5L1138 1012.8L1135 1012.8L1135 1011.9L1132 1011.9L1132 1012.0L1129 1012.0L1129 1017.5L1126 1017.5L1126 1019.6L1123 1019.6L1123 1019.1L1120 1019.1L1120 1019.5L1117 1019.5L1117 1019.4L1114 1019.4L1114 1019.4L1111 1019.4L1111 1018.3L1108 1018.3L1108 1018.5L1105 1018.5L1105 1019.7L1102 1019.7L1102 1019.9L1099 1019.9L1099 1018.0L1096 1018.0L1096 1018.9L1093 1018.9L1093 1019.4L1090 1019.4L1090 1015.7L1087 1015.7L1087 1013.5L1084 1013.5L1084 1012.3L1081 1012.3L1081 1011.9L1078 1011.9L1078 1011.8L1075 1011.8L1075 1012.7L1072 1012.7L1072 1011.7L1069 1011.7L1069 1012.0L1066 1012.0L1066 1012.1L1063 1012.1L1063 1012.4L1060 1012.4L1060 1012.2L1057 1012.2L1057 1013.2L1054 1013.2L1054 1011.9L1051 1011.9L1051 1011.6L1048 1011.6L1048 1011.6L1045 1011.6L1045 1011.7L1042 1011.7L1042 1013.4L1039 1013.4L1039 1011.8L1036 1011.8L1036 1013.2L1033 1013.2L1033 1011.7L1030 1011.7L1030 1012.2L1027 1012.2L1027 1012.0L1024 1012.0L1024 1011.9L1021 1011.9L1021 1012.9L1018 1012.9L1018 1012.1L1015 1012.1L1015 1011.7L1012 1011.7L1012 1011.5L1009 1011.5L1009 1012.7L1006 1012.7L1006 1012.3L1003 1012.3L1003 1011.5L1000 1011.5L1000 1012.5L997 1012.5L997 1013.2L994 1013.2L994 1013.0L991 1013.0L991 1013.3L988 1013.3L988 1011.8L985 1011.8L985 1011.9L982 1011.9L982 1013.3L979 1013.3L979 1013.1L976 1013.1L976 1011.5L973 1011.5L973 1012.3L970 1012.3L970 1014.5L967 1014.5L967 1018.6L964 1018.6L964 1018.6L961 1018.6L961 1019.4L958 1019.4L958 1018.2L955 1018.2L955 1019.5L952 1019.5L952 1019.7L949 1019.7L949 1018.7L946 1018.7L946 1018.6L943 1018.6L943 1019.0L940 1019.0L940 1018.0L937 1018.0L937 1019.6L934 1019.6L934 1014.7L931 1014.7L931 1012.4L928 1012.4L928 1013.3L925 1013.3L925 1017.7L922 1017.7L922 1019.2L919 1019.2L919 1019.9L916 1019.9L916 1018.5L913 1018.5L913 1019.9L910 1019.9L910 1018.9L907 1018.9L907 1019.9L904 1019.9L904 1018.4L901 1018.4L901 1018.2L898 1018.2L898 1018.9L895 1018.9L895 1018.6L892 1018.6L892 1019.4L889 1019.4L889 1018.5L886 1018.5L886 1017.8L883 1017.8L883 1014.8L880 1014.8L880 1011.9L877 1011.9L877 1011.6L874 1011.6L874 1012.6L871 1012.6L871 1012.8L868 1012.8L868 1012.2L865 1012.2L865 1013.4L862 1013.4L862 1011.8L859 1011.8L859 1011.9L856 1011.9L856 1011.9L853 1011.9L853 1011.5L850 1011.5L850 1012.5L847 1012.5L847 1012.9L844 1012.9L844 1011.4L841 1011.4L841 1012.8L838 1012.8L838 1012.7L835 1012.7L835 1013.1L832 1013.1L832 1012.1L829 1012.1L829 1011.5L826 1011.5L826 1012.8L823 1012.8L823 1013.2L820 1013.2L820 1013.1L817 1013.1L817 1013.1L814 1013.1L814 1012.4L811 1012.4L811 1013.0L808 1013.0L808 1012.7L805 1012.7L805 1013.1L802 1013.1L802 1012.7L799 1012.7L799 1011.7L796 1011.7L796 1012.1L793 1012.1L793 1013.2L790 1013.2L790 1012.7L787 1012.7L787 1012.5L784 1012.5L784 1011.9L781 1011.9L781 1011.4L778 1011.4L778 1012.2L775 1012.2L775 1011.9L772 1011.9L772 1012.4L769 1012.4L769 1012.4L766 1012.4L766 1012.2L763 1012.2L763 1012.1L760 1012.1L760 1013.3L757 1013.3L757 1012.5L754 1012.5L754 1013.3L751 1013.3L751 1012.3L748 1012.3L748 1012.3L745 1012.3L745 1011.9L742 1011.9L742 1012.7L739 1012.7L739 1013.1L736 1013.1L736 1011.7L733 1011.7L733 1012.9L730 1012.9L730 1011.7L727 1011.7L727 1012.1L724 1012.1L724 1012.7L721 1012.7L721 1013.1L718 1013.1L718 1013.4L715 1013.4L715 1012.4L712 1012.4L712 1013.1L709 1013.1L709 1012.3L706 1012.3Z" fill="#2dd695"/>
</svg>
<svg style="position:absolute;left:1268px;top:952px;" width="14" height="14" viewBox="0 0 14 14"><path d="M1 0H13V12Z" fill="#d0d0d0"/><path d="M1 0L13 12" stroke="#111" stroke-width="1.5"/></svg>
<div style="position:absolute;left:1292px;top:208px;width:2px;height:930px;background:#2d8ceb;"></div>
<svg style="position:absolute;left:1274px;top:170px;" width="38" height="40" viewBox="0 0 38 40"><path d="M2 2H36V26L24 38H14L2 26Z" fill="#2d8ceb"/><rect x="18" y="30" width="2" height="9" fill="#111"/></svg>
<div style="position:absolute;left:1137px;top:523px;width:472px;height:148px;background:#f0922a;"></div>
<div style="position:absolute;left:1143px;top:529px;width:460px;height:135px;background:#f0f0f0;"></div>
<div style="position:absolute;left:1143px;top:662px;width:460px;height:2px;background:#b8b8b8;"></div>
<div id="mv" style="position:absolute;left:1228.60px;top:550.40px;font-family:'Liberation Sans',sans-serif;font-size:38px;line-height:38px;color:#000;white-space:nowrap;transform:scaleX(0.9485);transform-origin:0 0;">Move into Sync</div>
<div id="sl" style="position:absolute;left:1230.00px;top:611.80px;font-family:'Liberation Sans',sans-serif;font-size:38px;line-height:38px;color:#000;white-space:nowrap;transform:scaleX(0.9243);transform-origin:0 0;">Slip into Sync</div>
<div style="position:absolute;left:35px;top:1142px;width:1700px;height:32px;box-sizing:border-box;border:2px solid #2a2a2a;border-radius:16px;background:#1e1e1e"></div>
<div style="position:absolute;left:87px;top:1144px;width:383px;height:26px;background:#333333;"></div>
<svg style="position:absolute;left:71px;top:1142px;" width="32" height="32" viewBox="0 0 32 32"><circle cx="16" cy="16" r="12" fill="#333" stroke="#999" stroke-width="6"/></svg>
<svg style="position:absolute;left:454px;top:1142px;" width="32" height="32" viewBox="0 0 32 32"><circle cx="16" cy="16" r="12" fill="#333" stroke="#999" stroke-width="6"/></svg></body></html>
